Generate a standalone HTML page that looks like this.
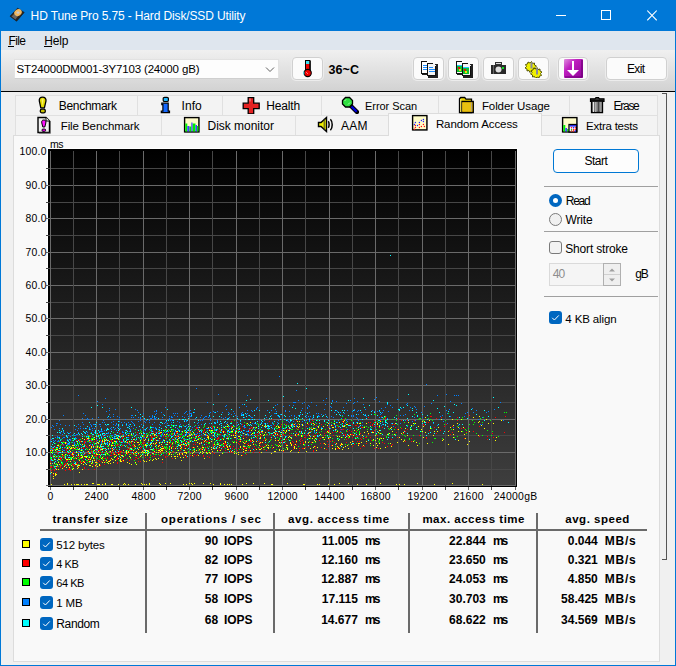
<!DOCTYPE html>
<html><head><meta charset="utf-8">
<style>
*{margin:0;padding:0;box-sizing:border-box}
html,body{width:676px;height:666px;overflow:hidden;background:#f0f0f0}
body{position:relative;font-family:"Liberation Sans",sans-serif;font-size:11.5px;color:#000}
.a{position:absolute}
.t{position:absolute;white-space:nowrap;line-height:14px}
#title{left:0;top:0;width:676px;height:31px;background:#0078d7}
#menubar{left:1px;top:31px;width:674px;height:19px;background:#dfe6ee}
#toolbar{left:1px;top:50px;width:674px;height:41px;background:linear-gradient(#f0f0f0,#d2d2d2)}
#tbline{left:1px;top:91px;width:674px;height:1px;background:#000}
.bl{background:#0078d7}
.btn{position:absolute;background:#fbfbfb;border:1px solid #d0d0d0;border-radius:4px;box-shadow:0 0 0 1px #ececec}
.tab{position:absolute;background:#f3f3f3;border:1px solid #e0e0e0;border-bottom:none}
.mono{font-family:"Liberation Mono",monospace;font-weight:bold}
.chk{position:absolute;width:13px;height:13px;border-radius:3px;background:#0067c0}
.chk svg{position:absolute;left:0;top:0}
.sq{position:absolute;width:8px;height:8px;border:1px solid #000}
.sep{position:absolute;height:1px;background:#a0a0a0}
</style></head><body>

<!-- title bar -->
<div id="title" class="a"></div>
<svg class="a" style="left:0;top:0" width="30" height="30" viewBox="0 0 30 30">
  <path d="M10 16.2L17.6 8.2L24.2 12.4L16.6 21.2z" fill="#2a2520" stroke="#1a1510" stroke-width="0.6"/>
  <path d="M11.5 16.5L14.5 13.5L18 16L15.5 19.5z" fill="#6a6560"/>
  <ellipse cx="18" cy="12.6" rx="3.9" ry="3.3" transform="rotate(-35 18 12.6)" fill="#f0b860"/>
  <ellipse cx="18" cy="12.6" rx="1.4" ry="1.2" fill="#c8c8d0"/>
</svg>
<div class="a" style="left:556px;top:15px;width:10px;height:1px;background:#fff"></div>
<div class="a" style="left:601px;top:10px;width:10px;height:10px;border:1px solid #fff"></div>
<svg class="a" style="left:647px;top:10px" width="10" height="11" viewBox="0 0 10 11"><path d="M0.3 0.5L9.7 10.3M9.7 0.5L0.3 10.3" stroke="#fff" stroke-width="1.05"/></svg>

<!-- borders -->
<div class="a bl" style="left:0;top:0;width:1px;height:666px"></div>
<div class="a bl" style="left:675px;top:0;width:1px;height:666px"></div>
<div class="a bl" style="left:0;top:665px;width:676px;height:1px"></div>

<!-- menu -->
<div id="menubar" class="a"></div>
<div class="a" style="left:8px;top:46px;width:6px;height:1px;background:#000"></div>
<div class="a" style="left:44px;top:46px;width:8px;height:1px;background:#000"></div>

<!-- toolbar -->
<div id="toolbar" class="a"></div>
<div id="tbline" class="a"></div>
<div class="a" style="left:14px;top:59px;width:265px;height:20px;background:#fdfdfd;border:1px solid #e2e2e2;border-bottom-color:#cfcfcf"></div>
<svg class="a" style="left:265px;top:66px" width="10" height="7" viewBox="0 0 10 7"><path d="M1 1.5L5 5.5L9 1.5" fill="none" stroke="#606060" stroke-width="1"/></svg>

<div class="btn" style="left:292px;top:57px;width:31px;height:23px"></div>
<svg class="a" style="left:300px;top:58px" width="14" height="20" viewBox="0 0 14 20">
  <rect x="5.5" y="2.5" width="4.5" height="12" fill="#f00000" stroke="#000" stroke-width="1"/>
  <rect x="6" y="3" width="3.5" height="3" fill="#40e0f0"/>
  <rect x="9.5" y="3" width="1.2" height="11" fill="#000"/>
  <circle cx="7.7" cy="15" r="3.6" fill="#f00000" stroke="#000" stroke-width="1.1"/>
  <path d="M3.8 13.5v3" stroke="#40e0f0" stroke-width="1"/>
  <path d="M6.5 14.5l1 1" stroke="#fff" stroke-width="0.9"/>
</svg>

<div class="btn" style="left:413px;top:57px;width:31px;height:23px"></div>
<div class="btn" style="left:448px;top:57px;width:31px;height:23px"></div>
<div class="btn" style="left:483px;top:57px;width:31px;height:23px"></div>
<div class="btn" style="left:518px;top:57px;width:31px;height:23px"></div>
<div class="btn" style="left:558px;top:57px;width:30px;height:23px"></div>
<div class="btn" style="left:606px;top:57px;width:61px;height:23px"></div>

<!-- toolbar icons -->
<svg class="a" style="left:419px;top:60px" width="20" height="19" viewBox="0 0 20 19" shape-rendering="crispEdges">
  <rect x="3" y="3" width="7" height="12" fill="#222"/>
  <path d="M2 1h6l2 2v11H2z" fill="#fff"/>
  <path d="M2 1h6v1H3v12H2zM2 13h8v1H2zM9 3h1v11H9z" fill="#111"/>
  <rect x="4" y="5" width="4" height="1" fill="#1a8cff"/><rect x="4" y="7" width="5" height="1" fill="#1a8cff"/><rect x="4" y="9" width="5" height="1" fill="#1a8cff"/>
  <rect x="9" y="4" width="10" height="14" fill="#222"/>
  <path d="M8 3h6l3 3v10H8z" fill="#f4f4f4"/>
  <path d="M8 3h6v1H9v11h7V6h1v10H8z" fill="#111"/>
  <rect x="10" y="7" width="4" height="1" fill="#1a8cff"/><rect x="10" y="9" width="6" height="1" fill="#1a8cff"/><rect x="10" y="11" width="6" height="1" fill="#1a8cff"/>
</svg>
<svg class="a" style="left:454px;top:60px" width="20" height="19" viewBox="0 0 20 19" shape-rendering="crispEdges">
  <rect x="3" y="3" width="7" height="12" fill="#222"/>
  <path d="M2 1h6l2 2v11H2z" fill="#fff"/>
  <path d="M2 1h6v1H3v12H2zM2 13h8v1H2zM9 3h1v11H9z" fill="#111"/>
  <rect x="3" y="5" width="6" height="1" fill="#20c8ff"/><rect x="3" y="6" width="6" height="6" fill="#10c030"/><rect x="4" y="7" width="2" height="2" fill="#e01010"/><rect x="5" y="9" width="2" height="2" fill="#f0e000"/>
  <rect x="9" y="4" width="10" height="14" fill="#222"/>
  <path d="M8 3h6l3 3v10H8z" fill="#f4f4f4"/>
  <path d="M8 3h6v1H9v11h7V6h1v10H8z" fill="#111"/>
  <rect x="9" y="7" width="6" height="1" fill="#20c8ff"/><rect x="9" y="8" width="6" height="6" fill="#10c030"/><rect x="10" y="9" width="2" height="2" fill="#e01010"/><rect x="11" y="11" width="2" height="2" fill="#f0e000"/>
</svg>
<svg class="a" style="left:490px;top:61px" width="17" height="14" viewBox="0 0 17 14" shape-rendering="crispEdges">
  <rect x="5" y="1" width="7" height="3" fill="#333"/><rect x="6" y="2" width="5" height="1" fill="#ddd"/>
  <rect x="1" y="4" width="15" height="9" fill="#2a2a2a"/>
  <rect x="3" y="4" width="1" height="9" fill="#666"/>
  <circle cx="8.5" cy="8.5" r="3" fill="#e0e0e0" shape-rendering="auto"/>
  <rect x="12" y="6" width="2" height="2" fill="#10e020"/>
</svg>
<svg class="a" style="left:525px;top:60px" width="20" height="18" viewBox="0 0 20 18">
  <g fill="#f0f000" stroke="#4a4a00" stroke-width="0.9">
    <path d="M6.5 1.5l1 2 2-0.5 0 2 2 1-1.5 1.5 1 2-2 0.5-0.5 2-2-1-1.5 1.5-1-2-2 0.5 0-2-2-1 1.5-1.5-1-2 2-0.5 0.5-2 2 1z"/>
    <path d="M12 7.5l1 2 2-0.5 0 2 2 1-1.5 1.5 1 2-2 0.5-0.5 2-2-1-1.5 1.5-1-2-2 0.5 0-2-2-1 1.5-1.5-1-2 2-0.5 0.5-2 2 1z"/>
  </g>
  <rect x="5.5" y="2.5" width="2" height="6" fill="#8888a0"/>
  <rect x="11" y="8.5" width="2" height="6" fill="#8888a0"/>
</svg>
<svg class="a" style="left:564px;top:59px" width="20" height="19" viewBox="0 0 20 19">
  <defs><linearGradient id="pg" x1="0" y1="0" x2="1" y2="1"><stop offset="0" stop-color="#e090e0"/><stop offset="0.35" stop-color="#c020c0"/><stop offset="1" stop-color="#900098"/></linearGradient></defs>
  <rect x="0" y="0" width="19" height="19" rx="1" fill="url(#pg)"/>
  <path d="M18 1v17H1" fill="none" stroke="#70007a" stroke-width="1.2"/>
  <rect x="8" y="2" width="2" height="11" fill="#fff"/>
  <path d="M3 11h12l-6 6z" fill="#fff"/>
</svg>

<!-- tabs -->
<!-- row 1 -->
<div class="tab" style="left:15px;top:95px;width:123px;height:20px"></div>
<div class="tab" style="left:137px;top:95px;width:86px;height:20px"></div>
<div class="tab" style="left:222px;top:95px;width:100px;height:20px"></div>
<div class="tab" style="left:321px;top:95px;width:118px;height:20px"></div>
<div class="tab" style="left:438px;top:95px;width:132px;height:20px"></div>
<div class="tab" style="left:569px;top:95px;width:89px;height:20px"></div>
<!-- row 2 -->
<div class="tab" style="left:15px;top:115px;width:147px;height:21px"></div>
<div class="tab" style="left:161px;top:115px;width:135px;height:21px"></div>
<div class="tab" style="left:295px;top:115px;width:94px;height:21px"></div>
<div class="tab" style="left:541px;top:115px;width:117px;height:21px"></div>

<!-- page -->
<div class="a" style="left:13px;top:135px;width:647px;height:527px;background:#f9f9f9;border:1px solid #dcdcdc"></div>
<!-- selected tab -->
<div class="a" style="left:388px;top:113px;width:154px;height:23px;background:#f9f9f9;border:1px solid #dcdcdc;border-bottom:none"></div>


<!-- tab icons -->
<svg class="a" style="left:37px;top:96px" width="12" height="18" viewBox="0 0 12 18">
  <path d="M5.5 1.2C3.2 1.2 2 2.6 2.3 4.8L3.8 11.8h3.6L9 4.8C9.3 2.6 8 1.2 5.5 1.2z" fill="#e4dc00" stroke="#000" stroke-width="1.3"/>
  <path d="M4.6 3.2c0.6-0.6 1.6-0.6 2 0l-1 7z" fill="#f8f070"/>
  <rect x="3.3" y="13.2" width="5" height="3.6" rx="1.6" fill="#c8c000" stroke="#000" stroke-width="1.3"/>
</svg>
<svg class="a" style="left:36px;top:116px" width="16" height="18" viewBox="0 0 16 18">
  <path d="M2 1.5h8l3.5 3.5v11.5H2z" fill="#f0f0f0" stroke="#000" stroke-width="1.4"/>
  <path d="M10 1.5v3.5h3.5" fill="#fff" stroke="#000" stroke-width="1"/>
  <path d="M14.5 5v12.3H3" fill="none" stroke="#777" stroke-width="1"/>
  <path d="M7.8 4C6 4 5.4 5.2 5.8 7l1 4h2l1-4C10.2 5.2 9.6 4 7.8 4z" fill="#ff10ff" stroke="#000" stroke-width="1"/>
  <rect x="6" y="13" width="3.6" height="2.4" rx="1" fill="#e000e0" stroke="#000" stroke-width="0.9"/>
</svg>
<svg class="a" style="left:160px;top:96px" width="12" height="18" viewBox="0 0 12 18">
  <rect x="3.2" y="1.3" width="5.2" height="4.2" rx="1.3" fill="#20b8ff" stroke="#000" stroke-width="1.2"/>
  <path d="M1.8 7.2h6.4v8h1.3v1.4H1.3v-1.4h1.6V8.6H1.8z" fill="#1468ff" stroke="#000" stroke-width="1.2"/>
</svg>
<svg class="a" style="left:242px;top:96px" width="18" height="18" viewBox="0 0 18 18">
  <path d="M6.2 1.7h5.5v5.5h5.5v5.5h-5.5v5.3H6.2v-5.3H1.2V7.2h5z" fill="#e42222" stroke="#000" stroke-width="1.3"/>
  <rect x="7" y="2.5" width="2" height="3" fill="#f06060"/>
</svg>
<svg class="a" style="left:340px;top:96px" width="19" height="18" viewBox="0 0 19 18">
  <path d="M11.5 10.5l5.5 5.5" stroke="#000" stroke-width="4.2" stroke-linecap="square"/>
  <path d="M11.5 10.5l5.2 5.2" stroke="#0000e0" stroke-width="2.2"/>
  <path d="M5.5 1.5h4l3 3v3.5l-3 3h-4l-3-3V4.5z" fill="#30e040" stroke="#000" stroke-width="1.3"/>
  <path d="M4.5 5l1.5-1.5M8 8.5l2-2" stroke="#c0ffc0" stroke-width="0.8"/>
</svg>
<svg class="a" style="left:458px;top:96px" width="17" height="18" viewBox="0 0 17 18">
  <path d="M1.5 2.8l1.2-1.3h4l1.3 1.6h5.5v13.5H1.5z" fill="#f0d800" stroke="#000" stroke-width="1.3"/>
  <path d="M3.5 5.5h11.8v11H3.5z" fill="#e4b400" stroke="#000" stroke-width="1.3"/>
  <path d="M4.5 6.5h9v9h-9z" fill="#e8c010"/>
  <rect x="13" y="6.5" width="1" height="9" fill="#b0a080"/>
  <rect x="2.3" y="3" width="1" height="13" fill="#fff080"/>
</svg>
<svg class="a" style="left:589px;top:96px" width="16" height="18" viewBox="0 0 16 18">
  <path d="M1.5 2.8h4.5l1-1.3h2.5l1 1.3h4.5v2.5h-13.5z" fill="#333" stroke="#000" stroke-width="1.2"/>
  <path d="M2.5 5h11v11.5h-11z" fill="#777" stroke="#000" stroke-width="1.3"/>
  <rect x="4" y="6" width="1" height="10" fill="#e8e8e8"/><rect x="6" y="6" width="1.5" height="10" fill="#aaa"/><rect x="9" y="6" width="1" height="10" fill="#444"/><rect x="11" y="6" width="1.5" height="10" fill="#999"/>
</svg>
<svg class="a" style="left:183px;top:116px" width="18" height="18" viewBox="0 0 18 18">
  <rect x="2" y="2" width="14.5" height="14.5" fill="#444" opacity="0.4"/>
  <rect x="1.6" y="1.6" width="14.3" height="14.3" fill="#fffcc8" stroke="#000" stroke-width="1.4"/>
  <path d="M2.3 7.5h2v8h-2zM6.3 10.5h2v5h-2zM9.5 7.5h3v8h-3zM14 10h1.3v5.5H14z" fill="#00ee00"/>
  <path d="M4.3 10h2v5.5h-2zM8.3 6.5h1.2v9H8.3zM12.5 9h1.5v6.5h-1.5z" fill="#4040ff"/>
</svg>
<svg class="a" style="left:317px;top:116px" width="18" height="17" viewBox="0 0 18 17">
  <path d="M1.5 6.5h2.5l5.5-5v14l-5.5-5H1.5z" fill="#f0f000" stroke="#000" stroke-width="1.4"/>
  <path d="M7.2 2.8v11.4" stroke="#333" stroke-width="0.9"/>
  <path d="M11.2 5.2c1.2 1.2 1.2 5.4 0 6.6M13.4 3.2c2.4 2.4 2.4 8.6 0 11" fill="none" stroke="#000" stroke-width="1.5"/>
</svg>
<svg class="a" style="left:411px;top:114px" width="18" height="18" viewBox="0 0 18 18">
  <rect x="2" y="2" width="14.5" height="14.5" fill="#444" opacity="0.4"/>
  <rect x="1.6" y="1.6" width="14.3" height="14.3" fill="#fffcc8" stroke="#000" stroke-width="1.4"/>
  <g fill="#2020ff"><circle cx="4.4" cy="8.5" r="0.7"/><circle cx="3.4" cy="10.5" r="0.7"/><circle cx="6.5" cy="11.5" r="0.7"/><circle cx="8.4" cy="8.5" r="0.7"/><circle cx="10.4" cy="6.5" r="0.7"/><circle cx="12.4" cy="5.5" r="0.7"/><circle cx="12.4" cy="7.5" r="0.7"/></g>
  <g fill="#ff1010"><circle cx="4.4" cy="11.5" r="0.7"/><circle cx="4.4" cy="13.5" r="0.7"/><circle cx="8.4" cy="10.5" r="0.7"/><circle cx="8.4" cy="13.5" r="0.7"/><circle cx="10.4" cy="12.5" r="0.7"/><circle cx="12.4" cy="10.5" r="0.7"/><circle cx="13.4" cy="12.5" r="0.7"/><circle cx="3.4" cy="15.3" r="0.7"/></g>
</svg>
<svg class="a" style="left:561px;top:116px" width="18" height="18" viewBox="0 0 18 18">
  <rect x="2" y="2" width="14.5" height="14.5" fill="#444" opacity="0.4"/>
  <rect x="1.6" y="1.6" width="14.3" height="14.3" fill="#fffcc8" stroke="#000" stroke-width="1.4"/>
  <path d="M2.3 9h2v6.5h-2z" fill="#00ee00"/><path d="M4.3 12h1.8v3.5H4.3z" fill="#4040ff"/><path d="M6.1 13h1.4v2.5H6.1z" fill="#00ee00"/>
  <rect x="8" y="8.5" width="7.5" height="7.5" fill="#fff" stroke="#000" stroke-width="1.3"/>
  <rect x="8.7" y="9.2" width="6.6" height="1.3" fill="#0000e0"/>
  <g fill="#ff1010"><circle cx="10.5" cy="11.8" r="0.75"/><circle cx="12.5" cy="13.8" r="0.75"/><circle cx="14.3" cy="11.8" r="0.75"/><circle cx="10.5" cy="15" r="0.75"/><circle cx="12.5" cy="15" r="0.75"/><circle cx="14.3" cy="13.8" r="0.75"/></g>
  <g fill="#1010ff"><circle cx="12.5" cy="11.8" r="0.75"/><circle cx="14.3" cy="15" r="0.75"/></g>
  <circle cx="10.5" cy="13.8" r="0.75" fill="#10c010"/>
</svg>

<!-- right bracket line -->
<div class="a" style="left:662px;top:93px;width:5px;height:1px;background:#555"></div>
<div class="a" style="left:666px;top:93px;width:1px;height:467px;background:#555"></div>
<div class="a" style="left:662px;top:559px;width:5px;height:1px;background:#555"></div>

<!-- chart -->
<svg class="a" style="left:0;top:0" width="676" height="666" viewBox="0 0 676 666" shape-rendering="crispEdges">
  <defs><linearGradient id="cg" x1="0" y1="0" x2="0" y2="1"><stop offset="0" stop-color="#000"/><stop offset="1" stop-color="#3e3e3e"/></linearGradient></defs>
  <rect x="47" y="148" width="471" height="340" fill="#fff"/>
  <rect x="48" y="149" width="469" height="338" fill="#000"/>
  <rect x="50" y="151" width="465" height="335" fill="url(#cg)"/>
  <rect x="46" y="485" width="470" height="1" fill="#6a6a6a"/>
<rect x="46" y="469" width="470" height="1" fill="#474747"/>
<rect x="46" y="452" width="470" height="1" fill="#6a6a6a"/>
<rect x="46" y="435" width="470" height="1" fill="#474747"/>
<rect x="46" y="419" width="470" height="1" fill="#6a6a6a"/>
<rect x="46" y="402" width="470" height="1" fill="#474747"/>
<rect x="46" y="385" width="470" height="1" fill="#6a6a6a"/>
<rect x="46" y="369" width="470" height="1" fill="#474747"/>
<rect x="46" y="352" width="470" height="1" fill="#6a6a6a"/>
<rect x="46" y="335" width="470" height="1" fill="#474747"/>
<rect x="46" y="318" width="470" height="1" fill="#6a6a6a"/>
<rect x="46" y="302" width="470" height="1" fill="#474747"/>
<rect x="46" y="285" width="470" height="1" fill="#6a6a6a"/>
<rect x="46" y="268" width="470" height="1" fill="#474747"/>
<rect x="46" y="252" width="470" height="1" fill="#6a6a6a"/>
<rect x="46" y="235" width="470" height="1" fill="#474747"/>
<rect x="46" y="218" width="470" height="1" fill="#6a6a6a"/>
<rect x="46" y="202" width="470" height="1" fill="#474747"/>
<rect x="46" y="185" width="470" height="1" fill="#6a6a6a"/>
<rect x="46" y="168" width="470" height="1" fill="#474747"/>
<rect x="50" y="151" width="1" height="339" fill="#6a6a6a"/>
<rect x="73" y="151" width="1" height="339" fill="#474747"/>
<rect x="96" y="151" width="1" height="339" fill="#6a6a6a"/>
<rect x="119" y="151" width="1" height="339" fill="#474747"/>
<rect x="143" y="151" width="1" height="339" fill="#6a6a6a"/>
<rect x="166" y="151" width="1" height="339" fill="#474747"/>
<rect x="189" y="151" width="1" height="339" fill="#6a6a6a"/>
<rect x="212" y="151" width="1" height="339" fill="#474747"/>
<rect x="236" y="151" width="1" height="339" fill="#6a6a6a"/>
<rect x="259" y="151" width="1" height="339" fill="#474747"/>
<rect x="282" y="151" width="1" height="339" fill="#6a6a6a"/>
<rect x="305" y="151" width="1" height="339" fill="#474747"/>
<rect x="329" y="151" width="1" height="339" fill="#6a6a6a"/>
<rect x="352" y="151" width="1" height="339" fill="#474747"/>
<rect x="375" y="151" width="1" height="339" fill="#6a6a6a"/>
<rect x="398" y="151" width="1" height="339" fill="#474747"/>
<rect x="422" y="151" width="1" height="339" fill="#6a6a6a"/>
<rect x="445" y="151" width="1" height="339" fill="#474747"/>
<rect x="468" y="151" width="1" height="339" fill="#6a6a6a"/>
<rect x="491" y="151" width="1" height="339" fill="#474747"/>
<rect x="515" y="151" width="1" height="339" fill="#6a6a6a"/>
<rect x="48" y="486" width="469" height="1" fill="#000"/>
  <path fill="#ffff00" d="M250 450h1v1h-1zM236 428h1v1h-1zM148 434h1v1h-1zM89 461h1v1h-1zM223 443h1v1h-1zM118 458h1v1h-1zM203 483h1v1h-1zM78 455h1v1h-1zM486 419h1v1h-1zM140 454h1v1h-1zM204 441h1v1h-1zM293 433h1v1h-1zM84 456h1v1h-1zM77 468h1v1h-1zM225 441h1v1h-1zM73 445h1v1h-1zM109 461h1v1h-1zM211 433h1v1h-1zM279 439h1v1h-1zM243 446h1v1h-1zM327 425h1v1h-1zM395 423h1v1h-1zM323 437h1v1h-1zM357 484h1v1h-1zM423 437h1v1h-1zM390 443h1v1h-1zM152 456h1v1h-1zM358 445h1v1h-1zM324 448h1v1h-1zM139 444h1v1h-1zM101 444h1v1h-1zM179 445h1v1h-1zM182 436h1v1h-1zM372 424h1v1h-1zM335 446h1v1h-1zM81 457h1v1h-1zM179 437h1v1h-1zM392 431h1v1h-1zM398 429h1v1h-1zM175 458h1v1h-1zM118 439h1v1h-1zM278 427h1v1h-1zM65 454h1v1h-1zM335 448h1v1h-1zM232 427h1v1h-1zM107 443h1v1h-1z"/>
<path fill="#ff0000" d="M73 453h1v1h-1zM139 457h1v1h-1zM117 459h1v1h-1zM217 438h1v1h-1zM152 437h1v1h-1zM203 432h1v1h-1zM270 437h1v1h-1zM130 447h1v1h-1zM66 461h1v1h-1zM250 428h1v1h-1zM123 452h1v1h-1zM128 452h1v1h-1zM300 443h1v1h-1zM328 431h1v1h-1zM245 448h1v1h-1zM99 456h1v1h-1zM473 431h1v1h-1zM352 434h1v1h-1zM314 437h1v1h-1zM194 450h1v1h-1zM137 434h1v1h-1zM53 449h1v1h-1zM331 445h1v1h-1zM126 459h1v1h-1zM145 449h1v1h-1zM88 469h1v1h-1zM248 443h1v1h-1zM64 465h1v1h-1zM346 424h1v1h-1zM64 464h1v1h-1zM72 464h1v1h-1zM308 424h1v1h-1zM218 437h1v1h-1zM100 452h1v1h-1zM95 451h1v1h-1zM218 438h1v1h-1zM296 432h1v1h-1zM95 466h1v1h-1zM66 465h1v1h-1zM163 439h1v1h-1zM176 447h1v1h-1zM80 450h1v1h-1zM249 430h1v1h-1zM183 441h1v1h-1z"/>
<path fill="#00ff00" d="M202 430h1v1h-1zM149 445h1v1h-1zM212 439h1v1h-1zM214 442h1v1h-1zM56 448h1v1h-1zM194 448h1v1h-1zM182 436h1v1h-1zM428 418h1v1h-1zM94 439h1v1h-1zM344 439h1v1h-1zM419 418h1v1h-1zM240 438h1v1h-1zM119 460h1v1h-1zM135 432h1v1h-1zM374 414h1v1h-1zM153 449h1v1h-1zM146 444h1v1h-1zM127 447h1v1h-1zM180 434h1v1h-1zM234 442h1v1h-1zM298 435h1v1h-1zM170 440h1v1h-1zM357 430h1v1h-1zM144 450h1v1h-1zM109 455h1v1h-1zM54 452h1v1h-1zM127 458h1v1h-1zM179 427h1v1h-1zM102 459h1v1h-1zM169 447h1v1h-1zM296 433h1v1h-1zM414 423h1v1h-1zM258 435h1v1h-1zM152 438h1v1h-1zM275 444h1v1h-1zM170 442h1v1h-1zM61 444h1v1h-1zM155 434h1v1h-1zM76 449h1v1h-1zM305 422h1v1h-1zM104 435h1v1h-1zM188 429h1v1h-1zM356 432h1v1h-1zM55 461h1v1h-1z"/>
<path fill="#0080ff" d="M88 419h1v1h-1zM73 454h1v1h-1zM114 440h1v1h-1zM437 425h1v1h-1zM169 416h1v1h-1zM214 429h1v1h-1zM83 428h1v1h-1zM63 441h1v1h-1zM214 423h1v1h-1zM114 429h1v1h-1zM177 435h1v1h-1zM151 431h1v1h-1zM244 433h1v1h-1zM458 395h1v1h-1zM63 432h1v1h-1zM365 409h1v1h-1zM76 426h1v1h-1zM159 424h1v1h-1zM358 410h1v1h-1zM162 434h1v1h-1zM65 425h1v1h-1zM416 409h1v1h-1zM238 429h1v1h-1zM446 394h1v1h-1zM122 438h1v1h-1zM131 421h1v1h-1zM254 423h1v1h-1zM264 423h1v1h-1zM295 423h1v1h-1zM299 419h1v1h-1zM112 435h1v1h-1zM160 425h1v1h-1zM195 418h1v1h-1zM128 425h1v1h-1zM329 424h1v1h-1zM140 429h1v1h-1zM54 441h1v1h-1zM188 443h1v1h-1zM217 421h1v1h-1zM146 433h1v1h-1zM122 424h1v1h-1zM184 426h1v1h-1z"/>
<path fill="#00ffff" d="M66 464h1v1h-1zM88 438h1v1h-1zM279 416h1v1h-1zM264 437h1v1h-1zM388 434h1v1h-1zM96 440h1v1h-1zM129 454h1v1h-1zM221 430h1v1h-1zM69 450h1v1h-1zM289 428h1v1h-1zM292 426h1v1h-1zM326 416h1v1h-1zM192 431h1v1h-1zM346 436h1v1h-1zM51 457h1v1h-1zM350 425h1v1h-1zM289 440h1v1h-1zM118 436h1v1h-1zM296 417h1v1h-1zM152 431h1v1h-1zM474 422h1v1h-1zM186 428h1v1h-1zM82 441h1v1h-1zM95 431h1v1h-1zM433 400h1v1h-1zM202 439h1v1h-1zM216 430h1v1h-1zM77 447h1v1h-1zM95 449h1v1h-1zM220 439h1v1h-1zM228 425h1v1h-1zM290 428h1v1h-1zM177 433h1v1h-1zM259 410h1v1h-1zM383 424h1v1h-1zM152 441h1v1h-1zM278 420h1v1h-1zM227 442h1v1h-1zM106 433h1v1h-1zM104 433h1v1h-1zM291 420h1v1h-1zM75 462h1v1h-1zM67 443h1v1h-1zM283 442h1v1h-1z"/>
<path fill="#ffff00" d="M234 453h1v1h-1zM291 445h1v1h-1zM99 465h1v1h-1zM287 448h1v1h-1zM91 452h1v1h-1zM227 447h1v1h-1zM349 436h1v1h-1zM125 484h1v1h-1zM443 439h1v1h-1zM315 441h1v1h-1zM289 430h1v1h-1zM363 438h1v1h-1zM301 436h1v1h-1zM186 445h1v1h-1zM329 428h1v1h-1zM104 443h1v1h-1zM70 451h1v1h-1zM75 444h1v1h-1zM223 446h1v1h-1zM315 438h1v1h-1zM89 453h1v1h-1zM207 435h1v1h-1zM360 423h1v1h-1zM92 455h1v1h-1zM164 440h1v1h-1zM121 436h1v1h-1zM141 455h1v1h-1zM169 448h1v1h-1zM170 431h1v1h-1zM111 484h1v1h-1zM210 483h1v1h-1zM177 442h1v1h-1zM421 429h1v1h-1zM279 427h1v1h-1zM175 456h1v1h-1zM357 422h1v1h-1zM56 474h1v1h-1zM97 466h1v1h-1zM182 444h1v1h-1zM191 437h1v1h-1zM259 432h1v1h-1zM155 443h1v1h-1zM166 434h1v1h-1zM404 440h1v1h-1zM145 445h1v1h-1zM256 449h1v1h-1z"/>
<path fill="#ff0000" d="M265 439h1v1h-1zM201 448h1v1h-1zM135 457h1v1h-1zM298 446h1v1h-1zM225 442h1v1h-1zM222 429h1v1h-1zM50 467h1v1h-1zM343 434h1v1h-1zM251 427h1v1h-1zM326 449h1v1h-1zM487 439h1v1h-1zM431 416h1v1h-1zM73 464h1v1h-1zM219 450h1v1h-1zM353 441h1v1h-1zM154 444h1v1h-1zM104 434h1v1h-1zM227 437h1v1h-1zM261 442h1v1h-1zM88 440h1v1h-1zM199 437h1v1h-1zM136 452h1v1h-1zM161 452h1v1h-1zM268 430h1v1h-1zM180 440h1v1h-1zM104 442h1v1h-1zM74 465h1v1h-1zM112 449h1v1h-1zM288 437h1v1h-1zM403 420h1v1h-1zM300 439h1v1h-1zM131 453h1v1h-1zM100 440h1v1h-1zM203 442h1v1h-1zM116 434h1v1h-1zM84 467h1v1h-1zM129 435h1v1h-1zM119 439h1v1h-1zM402 434h1v1h-1zM368 422h1v1h-1zM391 439h1v1h-1zM193 444h1v1h-1zM364 446h1v1h-1zM186 443h1v1h-1z"/>
<path fill="#00ff00" d="M351 420h1v1h-1zM316 429h1v1h-1zM75 457h1v1h-1zM61 463h1v1h-1zM208 442h1v1h-1zM161 449h1v1h-1zM82 453h1v1h-1zM476 433h1v1h-1zM84 436h1v1h-1zM417 429h1v1h-1zM260 429h1v1h-1zM70 449h1v1h-1zM108 440h1v1h-1zM100 457h1v1h-1zM89 438h1v1h-1zM68 464h1v1h-1zM177 446h1v1h-1zM348 444h1v1h-1zM138 445h1v1h-1zM206 444h1v1h-1zM190 441h1v1h-1zM72 468h1v1h-1zM132 449h1v1h-1zM321 431h1v1h-1zM172 451h1v1h-1zM65 447h1v1h-1zM321 435h1v1h-1zM134 439h1v1h-1zM128 452h1v1h-1zM128 427h1v1h-1zM373 440h1v1h-1zM171 427h1v1h-1zM146 447h1v1h-1zM342 415h1v1h-1zM333 423h1v1h-1zM122 435h1v1h-1zM70 457h1v1h-1zM61 439h1v1h-1zM405 436h1v1h-1zM266 439h1v1h-1zM190 432h1v1h-1zM110 439h1v1h-1zM178 434h1v1h-1zM99 459h1v1h-1z"/>
<path fill="#0080ff" d="M265 423h1v1h-1zM245 427h1v1h-1zM215 437h1v1h-1zM392 407h1v1h-1zM76 434h1v1h-1zM184 430h1v1h-1zM68 435h1v1h-1zM110 438h1v1h-1zM201 434h1v1h-1zM254 427h1v1h-1zM132 440h1v1h-1zM150 434h1v1h-1zM116 442h1v1h-1zM177 416h1v1h-1zM175 413h1v1h-1zM309 406h1v1h-1zM258 428h1v1h-1zM125 419h1v1h-1zM443 421h1v1h-1zM158 440h1v1h-1zM433 423h1v1h-1zM307 407h1v1h-1zM108 449h1v1h-1zM337 411h1v1h-1zM214 435h1v1h-1zM387 404h1v1h-1zM163 414h1v1h-1zM227 422h1v1h-1zM269 434h1v1h-1zM88 419h1v1h-1zM166 441h1v1h-1zM106 425h1v1h-1zM199 433h1v1h-1zM350 400h1v1h-1zM272 422h1v1h-1zM70 446h1v1h-1zM361 412h1v1h-1zM476 410h1v1h-1zM258 425h1v1h-1zM345 423h1v1h-1zM381 413h1v1h-1zM241 439h1v1h-1z"/>
<path fill="#00ffff" d="M54 454h1v1h-1zM85 463h1v1h-1zM217 444h1v1h-1zM133 444h1v1h-1zM100 446h1v1h-1zM271 415h1v1h-1zM249 425h1v1h-1zM173 426h1v1h-1zM90 440h1v1h-1zM261 430h1v1h-1zM236 440h1v1h-1zM235 431h1v1h-1zM167 431h1v1h-1zM305 430h1v1h-1zM213 445h1v1h-1zM123 439h1v1h-1zM145 429h1v1h-1zM229 445h1v1h-1zM426 435h1v1h-1zM362 419h1v1h-1zM363 398h1v1h-1zM292 427h1v1h-1zM433 422h1v1h-1zM254 415h1v1h-1zM52 459h1v1h-1zM198 420h1v1h-1zM84 432h1v1h-1zM379 430h1v1h-1zM355 438h1v1h-1zM299 431h1v1h-1zM245 442h1v1h-1zM162 419h1v1h-1zM154 416h1v1h-1zM400 407h1v1h-1zM352 443h1v1h-1zM371 429h1v1h-1zM88 439h1v1h-1zM52 435h1v1h-1zM125 446h1v1h-1zM124 445h1v1h-1zM108 424h1v1h-1zM105 450h1v1h-1zM179 431h1v1h-1zM90 445h1v1h-1z"/>
<path fill="#ffff00" d="M425 432h1v1h-1zM158 450h1v1h-1zM71 448h1v1h-1zM103 438h1v1h-1zM219 445h1v1h-1zM108 448h1v1h-1zM261 431h1v1h-1zM133 450h1v1h-1zM60 447h1v1h-1zM100 449h1v1h-1zM200 452h1v1h-1zM160 442h1v1h-1zM71 465h1v1h-1zM290 442h1v1h-1zM180 457h1v1h-1zM102 441h1v1h-1zM93 446h1v1h-1zM496 437h1v1h-1zM58 445h1v1h-1zM298 434h1v1h-1zM64 450h1v1h-1zM294 424h1v1h-1zM94 437h1v1h-1zM312 442h1v1h-1zM208 437h1v1h-1zM362 435h1v1h-1zM78 467h1v1h-1zM228 449h1v1h-1zM69 453h1v1h-1zM401 433h1v1h-1zM253 427h1v1h-1zM96 457h1v1h-1zM107 442h1v1h-1zM332 448h1v1h-1zM327 436h1v1h-1zM282 428h1v1h-1zM131 450h1v1h-1zM142 436h1v1h-1zM82 438h1v1h-1zM286 427h1v1h-1zM153 433h1v1h-1zM397 442h1v1h-1zM84 462h1v1h-1zM159 450h1v1h-1zM309 429h1v1h-1zM405 428h1v1h-1z"/>
<path fill="#ff0000" d="M122 441h1v1h-1zM104 441h1v1h-1zM60 447h1v1h-1zM311 442h1v1h-1zM71 454h1v1h-1zM84 442h1v1h-1zM163 436h1v1h-1zM188 451h1v1h-1zM219 431h1v1h-1zM352 424h1v1h-1zM119 439h1v1h-1zM178 435h1v1h-1zM53 466h1v1h-1zM102 450h1v1h-1zM263 440h1v1h-1zM350 427h1v1h-1zM302 448h1v1h-1zM293 424h1v1h-1zM142 457h1v1h-1zM135 454h1v1h-1zM253 452h1v1h-1zM69 445h1v1h-1zM99 448h1v1h-1zM300 441h1v1h-1zM204 429h1v1h-1zM260 446h1v1h-1zM90 453h1v1h-1zM368 417h1v1h-1zM141 442h1v1h-1zM90 459h1v1h-1zM223 435h1v1h-1zM272 448h1v1h-1zM79 456h1v1h-1zM98 450h1v1h-1zM360 448h1v1h-1zM174 439h1v1h-1zM224 431h1v1h-1zM102 442h1v1h-1zM173 442h1v1h-1zM315 446h1v1h-1zM205 448h1v1h-1zM362 437h1v1h-1zM276 428h1v1h-1zM281 424h1v1h-1z"/>
<path fill="#00ff00" d="M172 451h1v1h-1zM348 435h1v1h-1zM472 420h1v1h-1zM346 431h1v1h-1zM337 430h1v1h-1zM125 455h1v1h-1zM214 449h1v1h-1zM237 450h1v1h-1zM392 419h1v1h-1zM345 418h1v1h-1zM382 440h1v1h-1zM320 434h1v1h-1zM130 450h1v1h-1zM76 440h1v1h-1zM204 425h1v1h-1zM122 445h1v1h-1zM135 429h1v1h-1zM169 440h1v1h-1zM110 437h1v1h-1zM119 436h1v1h-1zM55 449h1v1h-1zM57 456h1v1h-1zM292 441h1v1h-1zM201 437h1v1h-1zM87 449h1v1h-1zM381 433h1v1h-1zM150 426h1v1h-1zM218 444h1v1h-1zM314 439h1v1h-1zM246 440h1v1h-1zM366 436h1v1h-1zM94 443h1v1h-1zM91 448h1v1h-1zM171 430h1v1h-1zM332 438h1v1h-1zM75 449h1v1h-1zM224 434h1v1h-1zM165 448h1v1h-1zM150 459h1v1h-1zM192 450h1v1h-1zM97 458h1v1h-1zM156 450h1v1h-1zM178 442h1v1h-1zM186 439h1v1h-1z"/>
<path fill="#0080ff" d="M251 419h1v1h-1zM87 434h1v1h-1zM229 431h1v1h-1zM104 422h1v1h-1zM51 439h1v1h-1zM63 415h1v1h-1zM57 448h1v1h-1zM246 431h1v1h-1zM464 416h1v1h-1zM78 424h1v1h-1zM437 395h1v1h-1zM231 427h1v1h-1zM311 402h1v1h-1zM122 432h1v1h-1zM174 432h1v1h-1zM50 441h1v1h-1zM118 426h1v1h-1zM337 422h1v1h-1zM325 414h1v1h-1zM53 426h1v1h-1zM267 426h1v1h-1zM82 446h1v1h-1zM325 404h1v1h-1zM293 426h1v1h-1zM184 417h1v1h-1zM64 447h1v1h-1zM357 401h1v1h-1zM179 425h1v1h-1zM218 394h1v1h-1zM169 418h1v1h-1zM307 408h1v1h-1zM87 436h1v1h-1zM147 433h1v1h-1zM184 420h1v1h-1zM197 423h1v1h-1zM77 448h1v1h-1zM254 429h1v1h-1zM113 424h1v1h-1zM101 431h1v1h-1zM488 411h1v1h-1zM141 431h1v1h-1zM344 413h1v1h-1z"/>
<path fill="#00ffff" d="M379 425h1v1h-1zM67 451h1v1h-1zM398 409h1v1h-1zM143 432h1v1h-1zM377 431h1v1h-1zM119 447h1v1h-1zM126 430h1v1h-1zM316 420h1v1h-1zM59 438h1v1h-1zM281 414h1v1h-1zM109 444h1v1h-1zM151 446h1v1h-1zM342 433h1v1h-1zM209 446h1v1h-1zM410 427h1v1h-1zM72 454h1v1h-1zM153 438h1v1h-1zM290 420h1v1h-1zM59 432h1v1h-1zM198 420h1v1h-1zM214 434h1v1h-1zM344 410h1v1h-1zM166 438h1v1h-1zM183 438h1v1h-1zM104 441h1v1h-1zM403 407h1v1h-1zM140 437h1v1h-1zM84 445h1v1h-1zM241 435h1v1h-1zM117 441h1v1h-1zM134 436h1v1h-1zM88 436h1v1h-1zM103 438h1v1h-1zM92 444h1v1h-1zM428 433h1v1h-1zM107 436h1v1h-1zM364 407h1v1h-1zM216 440h1v1h-1zM168 420h1v1h-1zM186 431h1v1h-1zM236 442h1v1h-1zM80 444h1v1h-1zM204 449h1v1h-1zM448 411h1v1h-1z"/>
<path fill="#ffff00" d="M92 462h1v1h-1zM165 432h1v1h-1zM102 458h1v1h-1zM339 422h1v1h-1zM115 456h1v1h-1zM281 432h1v1h-1zM260 438h1v1h-1zM294 447h1v1h-1zM188 430h1v1h-1zM170 441h1v1h-1zM210 453h1v1h-1zM344 420h1v1h-1zM242 484h1v1h-1zM141 452h1v1h-1zM182 441h1v1h-1zM114 448h1v1h-1zM213 447h1v1h-1zM77 466h1v1h-1zM239 428h1v1h-1zM123 456h1v1h-1zM208 427h1v1h-1zM239 436h1v1h-1zM265 440h1v1h-1zM243 449h1v1h-1zM105 483h1v1h-1zM473 417h1v1h-1zM379 426h1v1h-1zM97 484h1v1h-1zM53 465h1v1h-1zM234 451h1v1h-1zM211 449h1v1h-1zM143 435h1v1h-1zM95 462h1v1h-1zM263 447h1v1h-1zM220 450h1v1h-1zM289 436h1v1h-1zM118 484h1v1h-1zM223 431h1v1h-1zM53 478h1v1h-1zM350 442h1v1h-1zM358 429h1v1h-1zM359 434h1v1h-1zM323 426h1v1h-1zM84 439h1v1h-1zM154 435h1v1h-1zM334 423h1v1h-1z"/>
<path fill="#ff0000" d="M60 467h1v1h-1zM244 447h1v1h-1zM316 425h1v1h-1zM193 444h1v1h-1zM94 459h1v1h-1zM320 438h1v1h-1zM83 458h1v1h-1zM109 445h1v1h-1zM54 469h1v1h-1zM147 459h1v1h-1zM81 448h1v1h-1zM292 441h1v1h-1zM159 449h1v1h-1zM117 463h1v1h-1zM81 441h1v1h-1zM103 441h1v1h-1zM66 461h1v1h-1zM91 452h1v1h-1zM293 449h1v1h-1zM301 438h1v1h-1zM283 434h1v1h-1zM162 449h1v1h-1zM94 456h1v1h-1zM143 443h1v1h-1zM214 449h1v1h-1zM120 454h1v1h-1zM272 445h1v1h-1zM120 451h1v1h-1zM182 431h1v1h-1zM100 448h1v1h-1zM222 431h1v1h-1zM151 449h1v1h-1zM128 448h1v1h-1zM75 448h1v1h-1zM156 454h1v1h-1zM207 446h1v1h-1zM82 460h1v1h-1zM373 423h1v1h-1zM144 445h1v1h-1zM144 442h1v1h-1zM225 450h1v1h-1zM183 441h1v1h-1zM83 464h1v1h-1zM283 451h1v1h-1z"/>
<path fill="#00ff00" d="M82 450h1v1h-1zM183 436h1v1h-1zM388 443h1v1h-1zM423 420h1v1h-1zM81 447h1v1h-1zM123 435h1v1h-1zM235 432h1v1h-1zM115 446h1v1h-1zM130 442h1v1h-1zM100 450h1v1h-1zM70 446h1v1h-1zM244 445h1v1h-1zM127 458h1v1h-1zM338 438h1v1h-1zM141 435h1v1h-1zM466 430h1v1h-1zM341 424h1v1h-1zM487 436h1v1h-1zM292 426h1v1h-1zM221 439h1v1h-1zM319 425h1v1h-1zM75 446h1v1h-1zM80 439h1v1h-1zM281 445h1v1h-1zM211 447h1v1h-1zM325 435h1v1h-1zM199 438h1v1h-1zM206 431h1v1h-1zM71 458h1v1h-1zM233 429h1v1h-1zM97 454h1v1h-1zM264 449h1v1h-1zM127 450h1v1h-1zM117 444h1v1h-1zM105 458h1v1h-1zM451 429h1v1h-1zM209 442h1v1h-1zM131 442h1v1h-1zM492 431h1v1h-1zM276 449h1v1h-1zM466 433h1v1h-1zM58 457h1v1h-1zM54 467h1v1h-1zM102 454h1v1h-1z"/>
<path fill="#0080ff" d="M256 424h1v1h-1zM215 432h1v1h-1zM213 411h1v1h-1zM101 438h1v1h-1zM306 420h1v1h-1zM88 435h1v1h-1zM64 437h1v1h-1zM190 431h1v1h-1zM186 429h1v1h-1zM316 405h1v1h-1zM374 399h1v1h-1zM227 430h1v1h-1zM307 433h1v1h-1zM450 401h1v1h-1zM382 412h1v1h-1zM160 435h1v1h-1zM81 433h1v1h-1zM127 437h1v1h-1zM171 419h1v1h-1zM113 416h1v1h-1zM195 429h1v1h-1zM226 438h1v1h-1zM73 452h1v1h-1zM69 433h1v1h-1zM377 411h1v1h-1zM91 432h1v1h-1zM334 412h1v1h-1zM123 441h1v1h-1zM126 425h1v1h-1zM201 431h1v1h-1zM90 433h1v1h-1zM56 423h1v1h-1zM177 421h1v1h-1zM376 422h1v1h-1zM140 436h1v1h-1zM79 451h1v1h-1zM164 430h1v1h-1zM191 414h1v1h-1zM109 445h1v1h-1zM206 416h1v1h-1zM63 445h1v1h-1zM237 422h1v1h-1z"/>
<path fill="#00ffff" d="M221 423h1v1h-1zM208 433h1v1h-1zM243 414h1v1h-1zM427 419h1v1h-1zM66 449h1v1h-1zM118 424h1v1h-1zM268 425h1v1h-1zM116 442h1v1h-1zM73 438h1v1h-1zM147 451h1v1h-1zM494 409h1v1h-1zM283 396h1v1h-1zM387 403h1v1h-1zM169 446h1v1h-1zM119 429h1v1h-1zM388 437h1v1h-1zM382 434h1v1h-1zM422 423h1v1h-1zM233 425h1v1h-1zM115 451h1v1h-1zM118 451h1v1h-1zM425 424h1v1h-1zM74 425h1v1h-1zM52 438h1v1h-1zM268 426h1v1h-1zM152 449h1v1h-1zM198 429h1v1h-1zM292 423h1v1h-1zM250 424h1v1h-1zM158 418h1v1h-1zM90 453h1v1h-1zM137 447h1v1h-1zM281 430h1v1h-1zM251 425h1v1h-1zM342 410h1v1h-1zM471 409h1v1h-1zM253 437h1v1h-1zM238 432h1v1h-1zM178 445h1v1h-1zM84 446h1v1h-1zM110 448h1v1h-1zM322 416h1v1h-1zM341 446h1v1h-1zM207 428h1v1h-1z"/>
<path fill="#ffff00" d="M147 436h1v1h-1zM181 441h1v1h-1zM57 466h1v1h-1zM297 426h1v1h-1zM380 421h1v1h-1zM165 457h1v1h-1zM325 444h1v1h-1zM213 435h1v1h-1zM98 443h1v1h-1zM327 431h1v1h-1zM183 457h1v1h-1zM335 449h1v1h-1zM128 484h1v1h-1zM332 427h1v1h-1zM179 445h1v1h-1zM169 451h1v1h-1zM142 484h1v1h-1zM96 443h1v1h-1zM90 465h1v1h-1zM378 432h1v1h-1zM71 447h1v1h-1zM86 448h1v1h-1zM313 447h1v1h-1zM373 439h1v1h-1zM153 459h1v1h-1zM147 435h1v1h-1zM161 450h1v1h-1zM334 484h1v1h-1zM211 430h1v1h-1zM116 438h1v1h-1zM336 429h1v1h-1zM82 469h1v1h-1zM111 445h1v1h-1zM252 435h1v1h-1zM287 483h1v1h-1zM130 445h1v1h-1zM343 421h1v1h-1zM243 442h1v1h-1zM345 437h1v1h-1zM159 483h1v1h-1zM180 448h1v1h-1zM129 454h1v1h-1zM381 438h1v1h-1zM64 456h1v1h-1zM158 452h1v1h-1zM199 449h1v1h-1z"/>
<path fill="#ff0000" d="M96 455h1v1h-1zM368 434h1v1h-1zM170 435h1v1h-1zM56 457h1v1h-1zM129 460h1v1h-1zM129 460h1v1h-1zM62 455h1v1h-1zM328 427h1v1h-1zM113 454h1v1h-1zM184 445h1v1h-1zM357 436h1v1h-1zM362 425h1v1h-1zM424 421h1v1h-1zM297 424h1v1h-1zM206 434h1v1h-1zM95 455h1v1h-1zM255 448h1v1h-1zM111 455h1v1h-1zM183 443h1v1h-1zM366 443h1v1h-1zM76 463h1v1h-1zM262 432h1v1h-1zM64 448h1v1h-1zM228 426h1v1h-1zM64 456h1v1h-1zM109 445h1v1h-1zM356 436h1v1h-1zM130 450h1v1h-1zM299 450h1v1h-1zM226 446h1v1h-1zM73 455h1v1h-1zM314 435h1v1h-1zM243 447h1v1h-1zM190 431h1v1h-1zM88 455h1v1h-1zM217 438h1v1h-1zM242 424h1v1h-1zM92 451h1v1h-1zM103 448h1v1h-1zM85 445h1v1h-1zM452 426h1v1h-1zM84 441h1v1h-1zM101 449h1v1h-1zM145 457h1v1h-1z"/>
<path fill="#00ff00" d="M97 463h1v1h-1zM189 443h1v1h-1zM74 461h1v1h-1zM234 426h1v1h-1zM80 458h1v1h-1zM262 433h1v1h-1zM188 452h1v1h-1zM58 444h1v1h-1zM73 438h1v1h-1zM173 429h1v1h-1zM414 440h1v1h-1zM194 451h1v1h-1zM89 440h1v1h-1zM214 430h1v1h-1zM335 446h1v1h-1zM179 443h1v1h-1zM210 431h1v1h-1zM59 442h1v1h-1zM480 418h1v1h-1zM99 435h1v1h-1zM228 437h1v1h-1zM469 424h1v1h-1zM223 438h1v1h-1zM404 439h1v1h-1zM211 432h1v1h-1zM340 429h1v1h-1zM89 462h1v1h-1zM80 457h1v1h-1zM396 420h1v1h-1zM319 432h1v1h-1zM114 437h1v1h-1zM125 442h1v1h-1zM336 435h1v1h-1zM229 432h1v1h-1zM68 446h1v1h-1zM173 433h1v1h-1zM325 437h1v1h-1zM227 432h1v1h-1zM216 435h1v1h-1zM164 430h1v1h-1zM115 444h1v1h-1zM238 427h1v1h-1zM473 424h1v1h-1zM285 427h1v1h-1z"/>
<path fill="#0080ff" d="M382 422h1v1h-1zM100 424h1v1h-1zM165 432h1v1h-1zM280 414h1v1h-1zM240 421h1v1h-1zM197 433h1v1h-1zM74 442h1v1h-1zM62 429h1v1h-1zM241 435h1v1h-1zM217 420h1v1h-1zM227 418h1v1h-1zM229 428h1v1h-1zM88 439h1v1h-1zM283 406h1v1h-1zM134 424h1v1h-1zM172 420h1v1h-1zM294 415h1v1h-1zM161 442h1v1h-1zM99 424h1v1h-1zM100 431h1v1h-1zM215 430h1v1h-1zM291 415h1v1h-1zM231 414h1v1h-1zM223 426h1v1h-1zM220 431h1v1h-1zM87 418h1v1h-1zM145 430h1v1h-1zM185 412h1v1h-1zM456 395h1v1h-1zM80 426h1v1h-1zM248 434h1v1h-1zM63 444h1v1h-1zM256 424h1v1h-1zM63 437h1v1h-1zM133 417h1v1h-1zM115 442h1v1h-1zM191 416h1v1h-1zM254 437h1v1h-1zM109 414h1v1h-1zM55 437h1v1h-1zM140 439h1v1h-1zM252 417h1v1h-1z"/>
<path fill="#00ffff" d="M335 444h1v1h-1zM430 427h1v1h-1zM54 462h1v1h-1zM98 436h1v1h-1zM183 419h1v1h-1zM188 436h1v1h-1zM380 412h1v1h-1zM127 427h1v1h-1zM115 443h1v1h-1zM175 441h1v1h-1zM142 416h1v1h-1zM221 425h1v1h-1zM380 423h1v1h-1zM220 421h1v1h-1zM275 431h1v1h-1zM258 431h1v1h-1zM159 431h1v1h-1zM311 429h1v1h-1zM118 438h1v1h-1zM302 418h1v1h-1zM66 435h1v1h-1zM385 422h1v1h-1zM67 437h1v1h-1zM173 425h1v1h-1zM116 435h1v1h-1zM101 437h1v1h-1zM188 424h1v1h-1zM104 440h1v1h-1zM357 422h1v1h-1zM228 438h1v1h-1zM72 457h1v1h-1zM416 429h1v1h-1zM278 431h1v1h-1zM50 473h1v1h-1zM417 416h1v1h-1zM119 456h1v1h-1zM249 419h1v1h-1zM107 424h1v1h-1zM398 418h1v1h-1zM293 421h1v1h-1zM128 439h1v1h-1zM416 412h1v1h-1zM249 415h1v1h-1zM61 442h1v1h-1z"/>
<path fill="#ffff00" d="M415 423h1v1h-1zM104 441h1v1h-1zM323 443h1v1h-1zM91 461h1v1h-1zM286 445h1v1h-1zM128 443h1v1h-1zM297 421h1v1h-1zM185 448h1v1h-1zM249 448h1v1h-1zM61 462h1v1h-1zM105 484h1v1h-1zM220 484h1v1h-1zM235 435h1v1h-1zM207 437h1v1h-1zM224 434h1v1h-1zM403 432h1v1h-1zM96 449h1v1h-1zM97 447h1v1h-1zM53 476h1v1h-1zM151 440h1v1h-1zM60 447h1v1h-1zM110 451h1v1h-1zM51 484h1v1h-1zM90 445h1v1h-1zM302 424h1v1h-1zM342 449h1v1h-1zM358 443h1v1h-1zM94 450h1v1h-1zM271 484h1v1h-1zM286 424h1v1h-1zM187 432h1v1h-1zM352 441h1v1h-1zM192 455h1v1h-1zM88 459h1v1h-1zM190 435h1v1h-1zM131 434h1v1h-1zM162 459h1v1h-1zM81 455h1v1h-1zM243 451h1v1h-1zM407 435h1v1h-1zM70 448h1v1h-1zM259 443h1v1h-1zM388 435h1v1h-1zM453 434h1v1h-1zM272 484h1v1h-1zM235 433h1v1h-1z"/>
<path fill="#ff0000" d="M196 427h1v1h-1zM293 447h1v1h-1zM68 465h1v1h-1zM308 434h1v1h-1zM98 460h1v1h-1zM181 460h1v1h-1zM338 427h1v1h-1zM54 466h1v1h-1zM137 432h1v1h-1zM121 446h1v1h-1zM419 435h1v1h-1zM232 448h1v1h-1zM105 452h1v1h-1zM187 446h1v1h-1zM96 440h1v1h-1zM313 451h1v1h-1zM206 444h1v1h-1zM203 431h1v1h-1zM216 431h1v1h-1zM87 458h1v1h-1zM246 424h1v1h-1zM172 433h1v1h-1zM82 444h1v1h-1zM165 435h1v1h-1zM282 442h1v1h-1zM229 432h1v1h-1zM282 434h1v1h-1zM66 460h1v1h-1zM351 434h1v1h-1zM84 467h1v1h-1zM55 459h1v1h-1zM326 432h1v1h-1zM96 457h1v1h-1zM122 437h1v1h-1zM258 448h1v1h-1zM374 426h1v1h-1zM194 435h1v1h-1zM354 434h1v1h-1zM101 461h1v1h-1zM324 439h1v1h-1zM239 444h1v1h-1zM81 463h1v1h-1zM155 454h1v1h-1zM245 443h1v1h-1z"/>
<path fill="#00ff00" d="M243 445h1v1h-1zM239 449h1v1h-1zM310 428h1v1h-1zM253 433h1v1h-1zM91 458h1v1h-1zM93 439h1v1h-1zM171 429h1v1h-1zM75 446h1v1h-1zM163 435h1v1h-1zM56 464h1v1h-1zM135 440h1v1h-1zM284 430h1v1h-1zM140 430h1v1h-1zM61 457h1v1h-1zM129 454h1v1h-1zM87 441h1v1h-1zM161 444h1v1h-1zM184 438h1v1h-1zM187 443h1v1h-1zM92 440h1v1h-1zM260 432h1v1h-1zM91 458h1v1h-1zM62 464h1v1h-1zM198 448h1v1h-1zM250 452h1v1h-1zM300 419h1v1h-1zM111 441h1v1h-1zM311 423h1v1h-1zM190 438h1v1h-1zM234 420h1v1h-1zM159 433h1v1h-1zM201 429h1v1h-1zM107 446h1v1h-1zM298 423h1v1h-1zM208 452h1v1h-1zM120 454h1v1h-1zM75 444h1v1h-1zM368 427h1v1h-1zM209 446h1v1h-1zM80 450h1v1h-1zM177 444h1v1h-1zM140 454h1v1h-1zM221 444h1v1h-1zM257 423h1v1h-1z"/>
<path fill="#0080ff" d="M304 402h1v1h-1zM51 460h1v1h-1zM318 413h1v1h-1zM92 445h1v1h-1zM106 429h1v1h-1zM73 452h1v1h-1zM151 418h1v1h-1zM90 444h1v1h-1zM123 441h1v1h-1zM387 418h1v1h-1zM329 427h1v1h-1zM140 429h1v1h-1zM424 406h1v1h-1zM407 426h1v1h-1zM190 441h1v1h-1zM156 417h1v1h-1zM185 439h1v1h-1zM241 413h1v1h-1zM272 428h1v1h-1zM156 413h1v1h-1zM400 423h1v1h-1zM287 419h1v1h-1zM378 422h1v1h-1zM309 421h1v1h-1zM379 417h1v1h-1zM253 428h1v1h-1zM149 429h1v1h-1zM380 414h1v1h-1zM113 447h1v1h-1zM447 423h1v1h-1zM292 425h1v1h-1zM302 408h1v1h-1zM135 409h1v1h-1zM55 455h1v1h-1zM74 435h1v1h-1zM215 422h1v1h-1zM259 432h1v1h-1zM365 414h1v1h-1zM351 415h1v1h-1zM105 434h1v1h-1zM279 417h1v1h-1zM127 433h1v1h-1z"/>
<path fill="#00ffff" d="M118 430h1v1h-1zM201 430h1v1h-1zM117 435h1v1h-1zM194 409h1v1h-1zM387 402h1v1h-1zM101 454h1v1h-1zM316 439h1v1h-1zM274 436h1v1h-1zM301 431h1v1h-1zM319 420h1v1h-1zM186 441h1v1h-1zM223 446h1v1h-1zM350 434h1v1h-1zM107 444h1v1h-1zM179 430h1v1h-1zM91 438h1v1h-1zM83 451h1v1h-1zM97 405h1v1h-1zM53 442h1v1h-1zM171 436h1v1h-1zM444 424h1v1h-1zM125 441h1v1h-1zM291 437h1v1h-1zM152 440h1v1h-1zM85 433h1v1h-1zM249 425h1v1h-1zM69 457h1v1h-1zM328 420h1v1h-1zM205 423h1v1h-1zM127 439h1v1h-1zM98 450h1v1h-1zM159 430h1v1h-1zM214 427h1v1h-1zM244 446h1v1h-1zM100 455h1v1h-1zM334 421h1v1h-1zM271 418h1v1h-1zM146 428h1v1h-1zM248 431h1v1h-1zM233 416h1v1h-1zM165 426h1v1h-1zM363 414h1v1h-1zM93 457h1v1h-1zM299 416h1v1h-1zM390 255h1v1h-1z"/>
<path fill="#ffff00" d="M338 447h1v1h-1zM224 484h1v1h-1zM73 445h1v1h-1zM181 448h1v1h-1zM330 437h1v1h-1zM181 446h1v1h-1zM203 452h1v1h-1zM255 430h1v1h-1zM104 462h1v1h-1zM237 438h1v1h-1zM229 426h1v1h-1zM166 451h1v1h-1zM76 464h1v1h-1zM350 434h1v1h-1zM54 463h1v1h-1zM189 483h1v1h-1zM204 458h1v1h-1zM241 455h1v1h-1zM111 439h1v1h-1zM160 451h1v1h-1zM213 484h1v1h-1zM124 483h1v1h-1zM102 457h1v1h-1zM239 438h1v1h-1zM379 430h1v1h-1zM89 457h1v1h-1zM171 454h1v1h-1zM194 451h1v1h-1zM274 432h1v1h-1zM144 450h1v1h-1zM299 421h1v1h-1zM366 437h1v1h-1zM214 436h1v1h-1zM55 461h1v1h-1zM129 456h1v1h-1zM219 455h1v1h-1zM113 447h1v1h-1zM135 484h1v1h-1zM268 447h1v1h-1zM134 442h1v1h-1zM71 447h1v1h-1zM205 432h1v1h-1zM304 433h1v1h-1zM58 451h1v1h-1zM127 462h1v1h-1zM106 460h1v1h-1z"/>
<path fill="#ff0000" d="M336 425h1v1h-1zM394 424h1v1h-1zM444 426h1v1h-1zM338 440h1v1h-1zM293 449h1v1h-1zM100 454h1v1h-1zM407 420h1v1h-1zM160 433h1v1h-1zM51 450h1v1h-1zM324 433h1v1h-1zM80 441h1v1h-1zM190 433h1v1h-1zM53 474h1v1h-1zM308 446h1v1h-1zM293 445h1v1h-1zM217 439h1v1h-1zM107 442h1v1h-1zM305 437h1v1h-1zM272 419h1v1h-1zM87 458h1v1h-1zM51 463h1v1h-1zM165 438h1v1h-1zM370 425h1v1h-1zM280 442h1v1h-1zM188 441h1v1h-1zM469 415h1v1h-1zM204 450h1v1h-1zM98 451h1v1h-1zM428 422h1v1h-1zM157 432h1v1h-1zM131 450h1v1h-1zM138 444h1v1h-1zM251 438h1v1h-1zM231 426h1v1h-1zM58 455h1v1h-1zM346 439h1v1h-1zM146 434h1v1h-1zM495 417h1v1h-1zM359 441h1v1h-1zM337 448h1v1h-1zM114 449h1v1h-1zM287 449h1v1h-1zM299 448h1v1h-1zM131 459h1v1h-1z"/>
<path fill="#00ff00" d="M82 444h1v1h-1zM51 448h1v1h-1zM400 427h1v1h-1zM269 433h1v1h-1zM141 442h1v1h-1zM155 444h1v1h-1zM304 445h1v1h-1zM177 450h1v1h-1zM134 449h1v1h-1zM61 461h1v1h-1zM291 433h1v1h-1zM249 447h1v1h-1zM140 443h1v1h-1zM138 458h1v1h-1zM165 429h1v1h-1zM101 452h1v1h-1zM56 448h1v1h-1zM89 442h1v1h-1zM292 429h1v1h-1zM61 454h1v1h-1zM232 432h1v1h-1zM88 455h1v1h-1zM223 445h1v1h-1zM116 436h1v1h-1zM136 441h1v1h-1zM363 427h1v1h-1zM215 447h1v1h-1zM219 443h1v1h-1zM433 435h1v1h-1zM165 450h1v1h-1zM145 444h1v1h-1zM230 444h1v1h-1zM193 433h1v1h-1zM72 448h1v1h-1zM277 425h1v1h-1zM86 446h1v1h-1zM164 446h1v1h-1zM323 439h1v1h-1zM147 442h1v1h-1zM404 435h1v1h-1zM379 422h1v1h-1zM313 425h1v1h-1zM286 425h1v1h-1zM271 445h1v1h-1z"/>
<path fill="#0080ff" d="M376 422h1v1h-1zM271 410h1v1h-1zM266 417h1v1h-1zM133 428h1v1h-1zM91 426h1v1h-1zM242 415h1v1h-1zM164 423h1v1h-1zM115 428h1v1h-1zM129 424h1v1h-1zM301 410h1v1h-1zM176 437h1v1h-1zM467 412h1v1h-1zM383 410h1v1h-1zM336 401h1v1h-1zM229 426h1v1h-1zM341 418h1v1h-1zM346 420h1v1h-1zM229 417h1v1h-1zM73 434h1v1h-1zM110 428h1v1h-1zM134 424h1v1h-1zM354 409h1v1h-1zM318 415h1v1h-1zM92 430h1v1h-1zM140 418h1v1h-1zM189 413h1v1h-1zM171 424h1v1h-1zM205 435h1v1h-1zM347 419h1v1h-1zM309 420h1v1h-1zM102 431h1v1h-1zM93 424h1v1h-1zM152 424h1v1h-1zM303 425h1v1h-1zM123 434h1v1h-1zM327 417h1v1h-1zM70 436h1v1h-1zM153 439h1v1h-1zM90 424h1v1h-1zM421 412h1v1h-1zM309 427h1v1h-1zM200 420h1v1h-1z"/>
<path fill="#00ffff" d="M61 431h1v1h-1zM251 438h1v1h-1zM101 429h1v1h-1zM286 420h1v1h-1zM254 410h1v1h-1zM476 414h1v1h-1zM98 442h1v1h-1zM230 438h1v1h-1zM392 423h1v1h-1zM188 432h1v1h-1zM188 418h1v1h-1zM484 410h1v1h-1zM335 410h1v1h-1zM163 432h1v1h-1zM216 448h1v1h-1zM408 394h1v1h-1zM278 423h1v1h-1zM254 419h1v1h-1zM262 430h1v1h-1zM343 412h1v1h-1zM245 413h1v1h-1zM91 407h1v1h-1zM156 443h1v1h-1zM126 437h1v1h-1zM237 418h1v1h-1zM55 466h1v1h-1zM69 442h1v1h-1zM403 420h1v1h-1zM387 419h1v1h-1zM147 436h1v1h-1zM68 457h1v1h-1zM424 422h1v1h-1zM224 435h1v1h-1zM239 428h1v1h-1zM86 431h1v1h-1zM226 435h1v1h-1zM498 407h1v1h-1zM143 439h1v1h-1zM349 430h1v1h-1zM243 415h1v1h-1zM156 435h1v1h-1zM103 448h1v1h-1zM288 426h1v1h-1zM191 415h1v1h-1z"/>
<path fill="#ffff00" d="M160 438h1v1h-1zM303 444h1v1h-1zM138 449h1v1h-1zM450 427h1v1h-1zM171 447h1v1h-1zM307 423h1v1h-1zM375 440h1v1h-1zM262 425h1v1h-1zM397 442h1v1h-1zM309 435h1v1h-1zM117 438h1v1h-1zM117 458h1v1h-1zM363 445h1v1h-1zM260 434h1v1h-1zM461 431h1v1h-1zM197 442h1v1h-1zM54 459h1v1h-1zM112 439h1v1h-1zM110 463h1v1h-1zM120 460h1v1h-1zM185 455h1v1h-1zM159 443h1v1h-1zM88 451h1v1h-1zM62 454h1v1h-1zM268 448h1v1h-1zM67 463h1v1h-1zM176 452h1v1h-1zM152 460h1v1h-1zM154 434h1v1h-1zM73 468h1v1h-1zM319 484h1v1h-1zM377 438h1v1h-1zM338 440h1v1h-1zM295 435h1v1h-1zM433 435h1v1h-1zM156 440h1v1h-1zM172 443h1v1h-1zM185 432h1v1h-1zM308 433h1v1h-1zM196 450h1v1h-1zM86 456h1v1h-1zM91 463h1v1h-1zM192 484h1v1h-1zM97 446h1v1h-1zM53 473h1v1h-1zM281 432h1v1h-1z"/>
<path fill="#ff0000" d="M114 452h1v1h-1zM220 430h1v1h-1zM61 460h1v1h-1zM58 459h1v1h-1zM120 433h1v1h-1zM118 453h1v1h-1zM347 431h1v1h-1zM254 450h1v1h-1zM328 430h1v1h-1zM374 420h1v1h-1zM103 436h1v1h-1zM82 457h1v1h-1zM147 437h1v1h-1zM278 435h1v1h-1zM151 436h1v1h-1zM82 455h1v1h-1zM219 429h1v1h-1zM333 435h1v1h-1zM63 467h1v1h-1zM464 428h1v1h-1zM321 424h1v1h-1zM436 433h1v1h-1zM91 441h1v1h-1zM107 458h1v1h-1zM303 448h1v1h-1zM225 432h1v1h-1zM119 453h1v1h-1zM172 458h1v1h-1zM127 441h1v1h-1zM338 448h1v1h-1zM77 456h1v1h-1zM360 438h1v1h-1zM239 438h1v1h-1zM352 446h1v1h-1zM172 438h1v1h-1zM78 466h1v1h-1zM391 445h1v1h-1zM99 447h1v1h-1zM449 430h1v1h-1zM138 454h1v1h-1zM346 442h1v1h-1zM200 443h1v1h-1zM84 468h1v1h-1zM131 442h1v1h-1z"/>
<path fill="#00ff00" d="M168 429h1v1h-1zM85 457h1v1h-1zM110 435h1v1h-1zM264 435h1v1h-1zM191 438h1v1h-1zM62 462h1v1h-1zM86 448h1v1h-1zM309 428h1v1h-1zM299 440h1v1h-1zM140 432h1v1h-1zM146 434h1v1h-1zM79 459h1v1h-1zM431 428h1v1h-1zM346 422h1v1h-1zM59 446h1v1h-1zM356 438h1v1h-1zM69 464h1v1h-1zM70 464h1v1h-1zM273 423h1v1h-1zM177 444h1v1h-1zM51 465h1v1h-1zM363 436h1v1h-1zM190 453h1v1h-1zM58 466h1v1h-1zM96 448h1v1h-1zM147 443h1v1h-1zM166 438h1v1h-1zM155 454h1v1h-1zM78 444h1v1h-1zM128 437h1v1h-1zM175 443h1v1h-1zM75 439h1v1h-1zM121 458h1v1h-1zM242 448h1v1h-1zM90 433h1v1h-1zM106 453h1v1h-1zM92 436h1v1h-1zM215 423h1v1h-1zM159 438h1v1h-1zM298 446h1v1h-1zM107 440h1v1h-1zM300 433h1v1h-1zM166 444h1v1h-1zM97 450h1v1h-1z"/>
<path fill="#0080ff" d="M131 415h1v1h-1zM322 428h1v1h-1zM87 432h1v1h-1zM482 417h1v1h-1zM406 404h1v1h-1zM336 429h1v1h-1zM128 427h1v1h-1zM101 430h1v1h-1zM111 435h1v1h-1zM198 427h1v1h-1zM179 438h1v1h-1zM138 421h1v1h-1zM119 433h1v1h-1zM156 411h1v1h-1zM210 418h1v1h-1zM166 421h1v1h-1zM89 442h1v1h-1zM131 433h1v1h-1zM242 404h1v1h-1zM140 446h1v1h-1zM80 426h1v1h-1zM277 415h1v1h-1zM340 424h1v1h-1zM52 449h1v1h-1zM314 432h1v1h-1zM191 429h1v1h-1zM202 420h1v1h-1zM154 417h1v1h-1zM285 411h1v1h-1zM111 429h1v1h-1zM155 419h1v1h-1zM100 426h1v1h-1zM54 458h1v1h-1zM376 397h1v1h-1zM285 410h1v1h-1zM225 434h1v1h-1zM163 432h1v1h-1zM289 405h1v1h-1zM82 418h1v1h-1zM87 439h1v1h-1zM250 435h1v1h-1zM75 447h1v1h-1z"/>
<path fill="#00ffff" d="M118 428h1v1h-1zM240 432h1v1h-1zM71 458h1v1h-1zM95 424h1v1h-1zM274 429h1v1h-1zM130 431h1v1h-1zM113 454h1v1h-1zM83 431h1v1h-1zM427 415h1v1h-1zM284 415h1v1h-1zM187 456h1v1h-1zM199 435h1v1h-1zM95 426h1v1h-1zM259 438h1v1h-1zM122 456h1v1h-1zM113 454h1v1h-1zM81 447h1v1h-1zM98 430h1v1h-1zM175 430h1v1h-1zM285 436h1v1h-1zM221 429h1v1h-1zM78 433h1v1h-1zM74 433h1v1h-1zM257 432h1v1h-1zM74 445h1v1h-1zM51 441h1v1h-1zM161 422h1v1h-1zM296 441h1v1h-1zM151 445h1v1h-1zM228 414h1v1h-1zM230 423h1v1h-1zM220 432h1v1h-1zM214 433h1v1h-1zM175 427h1v1h-1zM125 446h1v1h-1zM138 437h1v1h-1zM449 416h1v1h-1zM269 418h1v1h-1zM163 440h1v1h-1zM407 405h1v1h-1zM85 428h1v1h-1zM161 428h1v1h-1zM217 436h1v1h-1zM167 409h1v1h-1z"/>
<path fill="#ffff00" d="M171 456h1v1h-1zM408 445h1v1h-1zM347 445h1v1h-1zM452 483h1v1h-1zM256 441h1v1h-1zM453 429h1v1h-1zM164 434h1v1h-1zM314 446h1v1h-1zM250 422h1v1h-1zM479 421h1v1h-1zM54 456h1v1h-1zM417 483h1v1h-1zM429 420h1v1h-1zM332 445h1v1h-1zM126 453h1v1h-1zM89 461h1v1h-1zM366 484h1v1h-1zM153 443h1v1h-1zM279 450h1v1h-1zM246 483h1v1h-1zM57 449h1v1h-1zM163 447h1v1h-1zM309 438h1v1h-1zM202 453h1v1h-1zM212 431h1v1h-1zM91 446h1v1h-1zM169 453h1v1h-1zM299 426h1v1h-1zM309 427h1v1h-1zM396 484h1v1h-1zM183 484h1v1h-1zM127 453h1v1h-1zM479 416h1v1h-1zM198 439h1v1h-1zM264 426h1v1h-1zM484 428h1v1h-1zM140 440h1v1h-1zM162 450h1v1h-1zM275 438h1v1h-1zM155 458h1v1h-1zM318 427h1v1h-1zM294 426h1v1h-1zM181 460h1v1h-1zM356 443h1v1h-1zM65 443h1v1h-1zM253 441h1v1h-1z"/>
<path fill="#ff0000" d="M314 436h1v1h-1zM61 465h1v1h-1zM66 452h1v1h-1zM238 443h1v1h-1zM63 455h1v1h-1zM59 442h1v1h-1zM230 446h1v1h-1zM305 447h1v1h-1zM170 446h1v1h-1zM487 436h1v1h-1zM158 435h1v1h-1zM213 445h1v1h-1zM88 453h1v1h-1zM343 429h1v1h-1zM339 432h1v1h-1zM336 444h1v1h-1zM218 438h1v1h-1zM212 427h1v1h-1zM95 446h1v1h-1zM228 452h1v1h-1zM321 447h1v1h-1zM169 435h1v1h-1zM249 428h1v1h-1zM209 429h1v1h-1zM329 438h1v1h-1zM254 446h1v1h-1zM69 449h1v1h-1zM190 452h1v1h-1zM110 455h1v1h-1zM117 459h1v1h-1zM126 450h1v1h-1zM286 439h1v1h-1zM220 430h1v1h-1zM164 449h1v1h-1zM54 446h1v1h-1zM482 422h1v1h-1zM209 457h1v1h-1zM53 448h1v1h-1zM479 436h1v1h-1zM297 434h1v1h-1zM233 446h1v1h-1zM340 429h1v1h-1zM469 415h1v1h-1zM366 441h1v1h-1z"/>
<path fill="#00ff00" d="M150 430h1v1h-1zM98 446h1v1h-1zM92 438h1v1h-1zM168 436h1v1h-1zM94 456h1v1h-1zM93 442h1v1h-1zM420 435h1v1h-1zM250 432h1v1h-1zM88 441h1v1h-1zM129 450h1v1h-1zM148 452h1v1h-1zM276 426h1v1h-1zM216 444h1v1h-1zM358 438h1v1h-1zM206 442h1v1h-1zM462 431h1v1h-1zM68 443h1v1h-1zM93 450h1v1h-1zM268 442h1v1h-1zM506 412h1v1h-1zM483 417h1v1h-1zM177 428h1v1h-1zM129 443h1v1h-1zM140 441h1v1h-1zM94 456h1v1h-1zM150 455h1v1h-1zM62 463h1v1h-1zM465 429h1v1h-1zM175 425h1v1h-1zM165 436h1v1h-1zM188 439h1v1h-1zM208 450h1v1h-1zM82 446h1v1h-1zM285 433h1v1h-1zM341 432h1v1h-1zM60 465h1v1h-1zM59 459h1v1h-1zM178 441h1v1h-1zM192 441h1v1h-1zM82 446h1v1h-1zM128 435h1v1h-1zM289 427h1v1h-1zM346 430h1v1h-1zM135 455h1v1h-1z"/>
<path fill="#0080ff" d="M366 416h1v1h-1zM362 422h1v1h-1zM77 430h1v1h-1zM301 424h1v1h-1zM126 424h1v1h-1zM503 420h1v1h-1zM53 450h1v1h-1zM393 426h1v1h-1zM237 425h1v1h-1zM172 434h1v1h-1zM69 425h1v1h-1zM78 432h1v1h-1zM171 422h1v1h-1zM97 436h1v1h-1zM167 423h1v1h-1zM133 423h1v1h-1zM156 432h1v1h-1zM414 424h1v1h-1zM179 434h1v1h-1zM270 425h1v1h-1zM133 439h1v1h-1zM247 395h1v1h-1zM333 417h1v1h-1zM143 430h1v1h-1zM201 415h1v1h-1zM186 432h1v1h-1zM269 432h1v1h-1zM381 419h1v1h-1zM144 421h1v1h-1zM93 445h1v1h-1zM138 412h1v1h-1zM236 436h1v1h-1zM257 407h1v1h-1zM148 441h1v1h-1zM178 438h1v1h-1zM345 423h1v1h-1zM54 429h1v1h-1zM243 426h1v1h-1zM309 427h1v1h-1zM181 427h1v1h-1zM250 416h1v1h-1zM109 436h1v1h-1z"/>
<path fill="#00ffff" d="M379 420h1v1h-1zM113 427h1v1h-1zM73 452h1v1h-1zM112 437h1v1h-1zM269 428h1v1h-1zM225 434h1v1h-1zM63 441h1v1h-1zM171 434h1v1h-1zM150 427h1v1h-1zM430 426h1v1h-1zM176 425h1v1h-1zM305 416h1v1h-1zM66 445h1v1h-1zM264 418h1v1h-1zM168 432h1v1h-1zM95 433h1v1h-1zM111 446h1v1h-1zM134 425h1v1h-1zM152 441h1v1h-1zM296 419h1v1h-1zM360 410h1v1h-1zM262 431h1v1h-1zM183 443h1v1h-1zM310 436h1v1h-1zM395 435h1v1h-1zM106 449h1v1h-1zM87 456h1v1h-1zM171 437h1v1h-1zM295 408h1v1h-1zM271 437h1v1h-1zM258 441h1v1h-1zM328 437h1v1h-1zM387 439h1v1h-1zM254 419h1v1h-1zM156 433h1v1h-1zM151 427h1v1h-1zM342 425h1v1h-1zM95 430h1v1h-1zM198 436h1v1h-1zM105 444h1v1h-1zM448 411h1v1h-1zM134 447h1v1h-1zM52 463h1v1h-1zM194 434h1v1h-1z"/>
<path fill="#ffff00" d="M211 447h1v1h-1zM441 419h1v1h-1zM66 459h1v1h-1zM102 440h1v1h-1zM185 452h1v1h-1zM274 451h1v1h-1zM178 450h1v1h-1zM337 436h1v1h-1zM380 448h1v1h-1zM78 454h1v1h-1zM102 484h1v1h-1zM463 427h1v1h-1zM145 455h1v1h-1zM328 438h1v1h-1zM64 455h1v1h-1zM144 484h1v1h-1zM130 457h1v1h-1zM112 442h1v1h-1zM339 483h1v1h-1zM194 434h1v1h-1zM78 484h1v1h-1zM229 446h1v1h-1zM176 431h1v1h-1zM159 451h1v1h-1zM146 484h1v1h-1zM252 442h1v1h-1zM158 458h1v1h-1zM236 442h1v1h-1zM97 442h1v1h-1zM217 427h1v1h-1zM139 447h1v1h-1zM335 430h1v1h-1zM280 426h1v1h-1zM92 462h1v1h-1zM156 437h1v1h-1zM214 439h1v1h-1zM123 445h1v1h-1zM102 442h1v1h-1zM62 451h1v1h-1zM224 427h1v1h-1zM260 442h1v1h-1zM469 441h1v1h-1zM290 437h1v1h-1zM74 445h1v1h-1zM252 440h1v1h-1zM204 434h1v1h-1z"/>
<path fill="#ff0000" d="M162 462h1v1h-1zM196 434h1v1h-1zM98 450h1v1h-1zM224 447h1v1h-1zM68 458h1v1h-1zM253 443h1v1h-1zM194 454h1v1h-1zM166 429h1v1h-1zM340 444h1v1h-1zM377 426h1v1h-1zM165 456h1v1h-1zM330 441h1v1h-1zM365 437h1v1h-1zM254 435h1v1h-1zM201 449h1v1h-1zM195 442h1v1h-1zM162 452h1v1h-1zM167 447h1v1h-1zM141 431h1v1h-1zM505 416h1v1h-1zM193 444h1v1h-1zM194 439h1v1h-1zM131 443h1v1h-1zM89 441h1v1h-1zM289 433h1v1h-1zM111 452h1v1h-1zM248 450h1v1h-1zM212 430h1v1h-1zM169 443h1v1h-1zM195 434h1v1h-1zM319 440h1v1h-1zM119 437h1v1h-1zM235 448h1v1h-1zM385 418h1v1h-1zM50 461h1v1h-1zM452 432h1v1h-1zM306 426h1v1h-1zM382 427h1v1h-1zM492 433h1v1h-1zM372 431h1v1h-1zM207 436h1v1h-1zM90 440h1v1h-1zM82 462h1v1h-1zM143 443h1v1h-1z"/>
<path fill="#00ff00" d="M317 435h1v1h-1zM275 427h1v1h-1zM171 433h1v1h-1zM379 442h1v1h-1zM98 454h1v1h-1zM202 445h1v1h-1zM258 424h1v1h-1zM377 421h1v1h-1zM183 441h1v1h-1zM184 430h1v1h-1zM181 440h1v1h-1zM139 438h1v1h-1zM255 428h1v1h-1zM434 438h1v1h-1zM388 435h1v1h-1zM66 454h1v1h-1zM153 440h1v1h-1zM58 450h1v1h-1zM62 442h1v1h-1zM457 426h1v1h-1zM91 438h1v1h-1zM231 432h1v1h-1zM114 456h1v1h-1zM337 425h1v1h-1zM372 440h1v1h-1zM149 449h1v1h-1zM275 427h1v1h-1zM279 439h1v1h-1zM175 453h1v1h-1zM143 436h1v1h-1zM90 442h1v1h-1zM226 429h1v1h-1zM218 443h1v1h-1zM117 458h1v1h-1zM285 449h1v1h-1zM133 439h1v1h-1zM233 426h1v1h-1zM95 446h1v1h-1zM50 468h1v1h-1zM81 458h1v1h-1zM64 455h1v1h-1zM227 446h1v1h-1zM71 442h1v1h-1zM145 452h1v1h-1z"/>
<path fill="#0080ff" d="M149 422h1v1h-1zM89 429h1v1h-1zM169 425h1v1h-1zM221 432h1v1h-1zM283 432h1v1h-1zM173 413h1v1h-1zM287 420h1v1h-1zM335 426h1v1h-1zM458 425h1v1h-1zM192 427h1v1h-1zM57 437h1v1h-1zM51 452h1v1h-1zM116 424h1v1h-1zM298 400h1v1h-1zM108 433h1v1h-1zM155 418h1v1h-1zM131 426h1v1h-1zM223 436h1v1h-1zM330 428h1v1h-1zM379 401h1v1h-1zM119 419h1v1h-1zM147 433h1v1h-1zM122 442h1v1h-1zM190 413h1v1h-1zM126 423h1v1h-1zM358 414h1v1h-1zM155 427h1v1h-1zM256 409h1v1h-1zM51 427h1v1h-1zM358 420h1v1h-1zM128 422h1v1h-1zM484 420h1v1h-1zM137 410h1v1h-1zM67 444h1v1h-1zM209 413h1v1h-1zM195 436h1v1h-1zM241 424h1v1h-1zM151 429h1v1h-1zM187 430h1v1h-1zM342 415h1v1h-1zM86 419h1v1h-1zM439 419h1v1h-1z"/>
<path fill="#00ffff" d="M436 429h1v1h-1zM175 435h1v1h-1zM150 443h1v1h-1zM369 405h1v1h-1zM262 421h1v1h-1zM58 450h1v1h-1zM100 445h1v1h-1zM103 433h1v1h-1zM51 459h1v1h-1zM459 417h1v1h-1zM168 431h1v1h-1zM62 428h1v1h-1zM316 432h1v1h-1zM156 429h1v1h-1zM205 423h1v1h-1zM210 412h1v1h-1zM439 412h1v1h-1zM90 458h1v1h-1zM73 454h1v1h-1zM296 436h1v1h-1zM151 442h1v1h-1zM79 434h1v1h-1zM68 464h1v1h-1zM194 449h1v1h-1zM161 454h1v1h-1zM59 432h1v1h-1zM62 452h1v1h-1zM232 450h1v1h-1zM211 423h1v1h-1zM164 441h1v1h-1zM257 421h1v1h-1zM179 453h1v1h-1zM54 443h1v1h-1zM132 452h1v1h-1zM79 448h1v1h-1zM177 446h1v1h-1zM64 433h1v1h-1zM213 447h1v1h-1zM74 445h1v1h-1zM255 423h1v1h-1zM92 434h1v1h-1zM125 432h1v1h-1zM185 434h1v1h-1zM111 431h1v1h-1z"/>
<path fill="#ffff00" d="M202 447h1v1h-1zM336 443h1v1h-1zM92 460h1v1h-1zM275 451h1v1h-1zM482 484h1v1h-1zM302 433h1v1h-1zM399 437h1v1h-1zM56 469h1v1h-1zM123 450h1v1h-1zM458 431h1v1h-1zM111 458h1v1h-1zM340 445h1v1h-1zM370 426h1v1h-1zM56 449h1v1h-1zM99 454h1v1h-1zM131 439h1v1h-1zM377 423h1v1h-1zM377 424h1v1h-1zM310 448h1v1h-1zM314 428h1v1h-1zM275 433h1v1h-1zM120 457h1v1h-1zM217 450h1v1h-1zM152 453h1v1h-1zM211 441h1v1h-1zM232 431h1v1h-1zM389 433h1v1h-1zM225 442h1v1h-1zM343 447h1v1h-1zM147 454h1v1h-1zM129 433h1v1h-1zM179 453h1v1h-1zM183 444h1v1h-1zM51 452h1v1h-1zM399 484h1v1h-1zM246 450h1v1h-1zM328 432h1v1h-1zM134 445h1v1h-1zM121 461h1v1h-1zM145 439h1v1h-1zM372 432h1v1h-1zM330 433h1v1h-1zM140 456h1v1h-1zM387 423h1v1h-1zM279 449h1v1h-1zM149 460h1v1h-1z"/>
<path fill="#ff0000" d="M109 442h1v1h-1zM117 452h1v1h-1zM154 452h1v1h-1zM83 447h1v1h-1zM311 427h1v1h-1zM274 425h1v1h-1zM86 439h1v1h-1zM130 448h1v1h-1zM335 431h1v1h-1zM51 466h1v1h-1zM180 444h1v1h-1zM68 447h1v1h-1zM112 450h1v1h-1zM345 435h1v1h-1zM60 464h1v1h-1zM207 441h1v1h-1zM168 432h1v1h-1zM429 430h1v1h-1zM168 455h1v1h-1zM293 442h1v1h-1zM61 458h1v1h-1zM175 437h1v1h-1zM87 451h1v1h-1zM230 452h1v1h-1zM206 441h1v1h-1zM426 422h1v1h-1zM77 447h1v1h-1zM63 441h1v1h-1zM105 461h1v1h-1zM66 450h1v1h-1zM131 443h1v1h-1zM197 454h1v1h-1zM78 445h1v1h-1zM89 452h1v1h-1zM60 459h1v1h-1zM289 433h1v1h-1zM216 429h1v1h-1zM294 444h1v1h-1zM285 443h1v1h-1zM154 456h1v1h-1zM59 457h1v1h-1zM68 440h1v1h-1zM101 442h1v1h-1zM68 452h1v1h-1z"/>
<path fill="#00ff00" d="M335 430h1v1h-1zM172 433h1v1h-1zM97 445h1v1h-1zM337 439h1v1h-1zM145 453h1v1h-1zM100 447h1v1h-1zM205 447h1v1h-1zM184 436h1v1h-1zM135 463h1v1h-1zM363 427h1v1h-1zM189 434h1v1h-1zM409 439h1v1h-1zM77 452h1v1h-1zM132 445h1v1h-1zM321 424h1v1h-1zM188 451h1v1h-1zM156 447h1v1h-1zM224 437h1v1h-1zM348 437h1v1h-1zM103 444h1v1h-1zM226 426h1v1h-1zM238 431h1v1h-1zM282 427h1v1h-1zM72 440h1v1h-1zM143 447h1v1h-1zM246 423h1v1h-1zM255 428h1v1h-1zM215 433h1v1h-1zM81 461h1v1h-1zM259 430h1v1h-1zM468 428h1v1h-1zM282 421h1v1h-1zM209 434h1v1h-1zM151 446h1v1h-1zM175 439h1v1h-1zM68 459h1v1h-1zM94 444h1v1h-1zM182 444h1v1h-1zM188 426h1v1h-1zM146 447h1v1h-1zM105 438h1v1h-1zM302 428h1v1h-1zM277 445h1v1h-1zM419 418h1v1h-1z"/>
<path fill="#0080ff" d="M398 418h1v1h-1zM340 431h1v1h-1zM420 418h1v1h-1zM132 422h1v1h-1zM162 419h1v1h-1zM101 431h1v1h-1zM478 419h1v1h-1zM486 412h1v1h-1zM354 398h1v1h-1zM357 418h1v1h-1zM241 414h1v1h-1zM293 405h1v1h-1zM186 425h1v1h-1zM113 421h1v1h-1zM87 426h1v1h-1zM335 425h1v1h-1zM92 428h1v1h-1zM156 410h1v1h-1zM450 416h1v1h-1zM347 421h1v1h-1zM237 416h1v1h-1zM313 421h1v1h-1zM204 417h1v1h-1zM240 428h1v1h-1zM207 402h1v1h-1zM93 452h1v1h-1zM326 398h1v1h-1zM214 423h1v1h-1zM293 402h1v1h-1zM248 415h1v1h-1zM270 433h1v1h-1zM107 433h1v1h-1zM494 409h1v1h-1zM301 433h1v1h-1zM130 430h1v1h-1zM246 406h1v1h-1zM106 411h1v1h-1zM268 428h1v1h-1zM124 442h1v1h-1zM251 417h1v1h-1zM381 408h1v1h-1zM167 425h1v1h-1z"/>
<path fill="#00ffff" d="M82 434h1v1h-1zM228 418h1v1h-1zM317 417h1v1h-1zM127 443h1v1h-1zM412 410h1v1h-1zM60 447h1v1h-1zM241 415h1v1h-1zM117 432h1v1h-1zM422 414h1v1h-1zM173 426h1v1h-1zM159 433h1v1h-1zM142 435h1v1h-1zM254 433h1v1h-1zM103 446h1v1h-1zM371 411h1v1h-1zM462 424h1v1h-1zM88 440h1v1h-1zM425 422h1v1h-1zM385 424h1v1h-1zM456 405h1v1h-1zM68 433h1v1h-1zM95 432h1v1h-1zM285 416h1v1h-1zM94 439h1v1h-1zM86 436h1v1h-1zM317 416h1v1h-1zM138 430h1v1h-1zM131 449h1v1h-1zM146 445h1v1h-1zM310 432h1v1h-1zM201 443h1v1h-1zM219 416h1v1h-1zM484 420h1v1h-1zM96 435h1v1h-1zM260 437h1v1h-1zM197 439h1v1h-1zM488 416h1v1h-1zM231 423h1v1h-1zM74 438h1v1h-1zM323 415h1v1h-1zM159 427h1v1h-1zM331 403h1v1h-1zM234 430h1v1h-1zM171 450h1v1h-1z"/>
<path fill="#ffff00" d="M163 448h1v1h-1zM87 438h1v1h-1zM159 451h1v1h-1zM213 432h1v1h-1zM259 445h1v1h-1zM346 424h1v1h-1zM146 437h1v1h-1zM74 444h1v1h-1zM133 439h1v1h-1zM148 453h1v1h-1zM339 436h1v1h-1zM96 462h1v1h-1zM448 435h1v1h-1zM227 424h1v1h-1zM97 447h1v1h-1zM191 483h1v1h-1zM286 431h1v1h-1zM75 446h1v1h-1zM82 444h1v1h-1zM156 459h1v1h-1zM148 451h1v1h-1zM251 430h1v1h-1zM368 440h1v1h-1zM172 452h1v1h-1zM418 426h1v1h-1zM146 437h1v1h-1zM110 463h1v1h-1zM448 431h1v1h-1zM68 465h1v1h-1zM291 444h1v1h-1zM253 444h1v1h-1zM453 437h1v1h-1zM99 441h1v1h-1zM112 450h1v1h-1zM128 443h1v1h-1zM264 447h1v1h-1zM341 437h1v1h-1zM114 441h1v1h-1zM120 445h1v1h-1zM98 484h1v1h-1zM109 441h1v1h-1zM339 448h1v1h-1zM84 462h1v1h-1zM280 446h1v1h-1zM148 440h1v1h-1zM425 417h1v1h-1z"/>
<path fill="#ff0000" d="M249 432h1v1h-1zM364 432h1v1h-1zM182 442h1v1h-1zM118 452h1v1h-1zM373 423h1v1h-1zM94 441h1v1h-1zM197 435h1v1h-1zM172 434h1v1h-1zM185 442h1v1h-1zM296 436h1v1h-1zM183 439h1v1h-1zM76 452h1v1h-1zM199 450h1v1h-1zM257 434h1v1h-1zM284 435h1v1h-1zM67 464h1v1h-1zM79 439h1v1h-1zM159 440h1v1h-1zM278 435h1v1h-1zM123 445h1v1h-1zM159 455h1v1h-1zM252 428h1v1h-1zM172 452h1v1h-1zM68 453h1v1h-1zM395 427h1v1h-1zM504 432h1v1h-1zM77 464h1v1h-1zM118 444h1v1h-1zM98 434h1v1h-1zM213 446h1v1h-1zM209 453h1v1h-1zM253 449h1v1h-1zM310 422h1v1h-1zM154 449h1v1h-1zM276 435h1v1h-1zM388 426h1v1h-1zM173 448h1v1h-1zM401 428h1v1h-1zM250 451h1v1h-1zM158 445h1v1h-1zM246 454h1v1h-1zM203 447h1v1h-1zM479 426h1v1h-1zM180 450h1v1h-1z"/>
<path fill="#00ff00" d="M141 431h1v1h-1zM217 443h1v1h-1zM245 442h1v1h-1zM244 422h1v1h-1zM187 449h1v1h-1zM432 442h1v1h-1zM180 437h1v1h-1zM219 428h1v1h-1zM304 432h1v1h-1zM134 460h1v1h-1zM181 449h1v1h-1zM338 426h1v1h-1zM181 434h1v1h-1zM231 422h1v1h-1zM166 427h1v1h-1zM325 424h1v1h-1zM203 448h1v1h-1zM174 440h1v1h-1zM267 428h1v1h-1zM374 422h1v1h-1zM91 451h1v1h-1zM161 435h1v1h-1zM120 444h1v1h-1zM182 432h1v1h-1zM191 440h1v1h-1zM182 441h1v1h-1zM78 446h1v1h-1zM185 445h1v1h-1zM228 439h1v1h-1zM52 451h1v1h-1zM184 436h1v1h-1zM91 455h1v1h-1zM52 450h1v1h-1zM193 449h1v1h-1zM145 451h1v1h-1zM239 439h1v1h-1zM316 438h1v1h-1zM376 434h1v1h-1zM258 447h1v1h-1zM62 459h1v1h-1zM376 422h1v1h-1zM226 438h1v1h-1zM130 454h1v1h-1zM379 440h1v1h-1z"/>
<path fill="#0080ff" d="M69 444h1v1h-1zM354 402h1v1h-1zM108 433h1v1h-1zM156 428h1v1h-1zM107 443h1v1h-1zM67 443h1v1h-1zM242 433h1v1h-1zM247 410h1v1h-1zM199 430h1v1h-1zM145 438h1v1h-1zM467 412h1v1h-1zM294 416h1v1h-1zM261 432h1v1h-1zM370 428h1v1h-1zM285 428h1v1h-1zM198 425h1v1h-1zM306 420h1v1h-1zM296 426h1v1h-1zM181 431h1v1h-1zM83 413h1v1h-1zM374 411h1v1h-1zM278 420h1v1h-1zM59 428h1v1h-1zM128 433h1v1h-1zM56 425h1v1h-1zM248 435h1v1h-1zM133 434h1v1h-1zM354 410h1v1h-1zM107 440h1v1h-1zM140 420h1v1h-1zM345 425h1v1h-1zM152 415h1v1h-1zM412 421h1v1h-1zM192 435h1v1h-1zM125 430h1v1h-1zM210 430h1v1h-1zM74 442h1v1h-1zM257 440h1v1h-1zM271 415h1v1h-1zM200 417h1v1h-1zM136 427h1v1h-1zM247 433h1v1h-1z"/>
<path fill="#00ffff" d="M52 460h1v1h-1zM252 419h1v1h-1zM190 430h1v1h-1zM248 424h1v1h-1zM120 451h1v1h-1zM185 419h1v1h-1zM106 430h1v1h-1zM220 445h1v1h-1zM118 421h1v1h-1zM362 427h1v1h-1zM321 428h1v1h-1zM180 440h1v1h-1zM80 453h1v1h-1zM61 462h1v1h-1zM339 439h1v1h-1zM113 449h1v1h-1zM137 448h1v1h-1zM201 431h1v1h-1zM135 435h1v1h-1zM249 440h1v1h-1zM68 441h1v1h-1zM371 432h1v1h-1zM269 426h1v1h-1zM69 449h1v1h-1zM261 423h1v1h-1zM98 435h1v1h-1zM244 404h1v1h-1zM243 430h1v1h-1zM143 445h1v1h-1zM335 430h1v1h-1zM240 420h1v1h-1zM144 449h1v1h-1zM306 388h1v1h-1zM417 415h1v1h-1zM283 428h1v1h-1zM181 426h1v1h-1zM377 415h1v1h-1zM58 440h1v1h-1zM221 414h1v1h-1zM156 445h1v1h-1zM394 417h1v1h-1zM100 434h1v1h-1zM93 434h1v1h-1zM101 449h1v1h-1z"/>
<path fill="#ffff00" d="M118 454h1v1h-1zM192 453h1v1h-1zM347 424h1v1h-1zM279 445h1v1h-1zM177 439h1v1h-1zM77 449h1v1h-1zM273 447h1v1h-1zM51 452h1v1h-1zM136 457h1v1h-1zM337 446h1v1h-1zM303 484h1v1h-1zM260 449h1v1h-1zM122 455h1v1h-1zM117 450h1v1h-1zM166 451h1v1h-1zM147 450h1v1h-1zM411 425h1v1h-1zM194 440h1v1h-1zM204 450h1v1h-1zM205 440h1v1h-1zM209 430h1v1h-1zM186 444h1v1h-1zM93 483h1v1h-1zM227 438h1v1h-1zM277 434h1v1h-1zM73 445h1v1h-1zM120 459h1v1h-1zM416 442h1v1h-1zM112 448h1v1h-1zM142 451h1v1h-1zM226 445h1v1h-1zM403 441h1v1h-1zM306 451h1v1h-1zM373 432h1v1h-1zM96 453h1v1h-1zM126 452h1v1h-1zM328 484h1v1h-1zM79 465h1v1h-1zM238 454h1v1h-1zM66 467h1v1h-1zM112 484h1v1h-1zM227 484h1v1h-1zM317 447h1v1h-1zM178 436h1v1h-1zM101 446h1v1h-1zM348 483h1v1h-1z"/>
<path fill="#ff0000" d="M94 459h1v1h-1zM92 453h1v1h-1zM374 448h1v1h-1zM146 436h1v1h-1zM111 446h1v1h-1zM129 452h1v1h-1zM118 452h1v1h-1zM134 452h1v1h-1zM167 447h1v1h-1zM129 449h1v1h-1zM296 445h1v1h-1zM311 428h1v1h-1zM493 437h1v1h-1zM171 440h1v1h-1zM222 447h1v1h-1zM424 425h1v1h-1zM461 428h1v1h-1zM398 418h1v1h-1zM310 437h1v1h-1zM185 451h1v1h-1zM258 441h1v1h-1zM401 420h1v1h-1zM84 442h1v1h-1zM257 438h1v1h-1zM129 447h1v1h-1zM136 441h1v1h-1zM126 459h1v1h-1zM457 420h1v1h-1zM355 439h1v1h-1zM67 448h1v1h-1zM278 444h1v1h-1zM154 436h1v1h-1zM423 424h1v1h-1zM56 447h1v1h-1zM236 433h1v1h-1zM362 446h1v1h-1zM104 464h1v1h-1zM349 423h1v1h-1zM90 445h1v1h-1zM244 428h1v1h-1zM60 457h1v1h-1zM114 436h1v1h-1zM151 439h1v1h-1zM198 430h1v1h-1z"/>
<path fill="#00ff00" d="M107 457h1v1h-1zM386 420h1v1h-1zM84 444h1v1h-1zM290 440h1v1h-1zM195 429h1v1h-1zM198 450h1v1h-1zM376 429h1v1h-1zM160 453h1v1h-1zM386 436h1v1h-1zM193 447h1v1h-1zM482 422h1v1h-1zM385 416h1v1h-1zM104 448h1v1h-1zM413 435h1v1h-1zM75 447h1v1h-1zM419 443h1v1h-1zM167 448h1v1h-1zM121 452h1v1h-1zM77 462h1v1h-1zM109 451h1v1h-1zM214 443h1v1h-1zM345 444h1v1h-1zM235 452h1v1h-1zM228 443h1v1h-1zM64 457h1v1h-1zM491 435h1v1h-1zM232 441h1v1h-1zM210 432h1v1h-1zM265 446h1v1h-1zM132 435h1v1h-1zM175 442h1v1h-1zM119 454h1v1h-1zM182 436h1v1h-1zM457 417h1v1h-1zM103 438h1v1h-1zM223 427h1v1h-1zM311 431h1v1h-1zM421 431h1v1h-1zM215 441h1v1h-1zM184 448h1v1h-1zM244 440h1v1h-1zM53 465h1v1h-1zM125 454h1v1h-1zM266 434h1v1h-1z"/>
<path fill="#0080ff" d="M210 432h1v1h-1zM203 418h1v1h-1zM160 438h1v1h-1zM360 419h1v1h-1zM267 423h1v1h-1zM316 413h1v1h-1zM273 424h1v1h-1zM306 415h1v1h-1zM160 436h1v1h-1zM168 431h1v1h-1zM138 417h1v1h-1zM236 427h1v1h-1zM72 442h1v1h-1zM108 419h1v1h-1zM170 441h1v1h-1zM220 423h1v1h-1zM156 410h1v1h-1zM186 421h1v1h-1zM81 445h1v1h-1zM226 409h1v1h-1zM264 420h1v1h-1zM160 432h1v1h-1zM151 430h1v1h-1zM259 432h1v1h-1zM359 426h1v1h-1zM194 433h1v1h-1zM375 427h1v1h-1zM58 437h1v1h-1zM83 454h1v1h-1zM314 431h1v1h-1zM242 412h1v1h-1zM85 442h1v1h-1zM91 425h1v1h-1zM272 423h1v1h-1zM244 426h1v1h-1zM167 433h1v1h-1zM91 449h1v1h-1zM231 409h1v1h-1zM309 412h1v1h-1zM217 421h1v1h-1zM217 429h1v1h-1zM152 427h1v1h-1z"/>
<path fill="#00ffff" d="M227 444h1v1h-1zM93 451h1v1h-1zM184 444h1v1h-1zM219 424h1v1h-1zM96 438h1v1h-1zM319 422h1v1h-1zM258 426h1v1h-1zM147 453h1v1h-1zM365 415h1v1h-1zM340 427h1v1h-1zM311 424h1v1h-1zM241 431h1v1h-1zM74 439h1v1h-1zM349 425h1v1h-1zM392 437h1v1h-1zM131 439h1v1h-1zM272 433h1v1h-1zM166 444h1v1h-1zM59 452h1v1h-1zM150 449h1v1h-1zM353 443h1v1h-1zM110 433h1v1h-1zM209 415h1v1h-1zM280 419h1v1h-1zM227 431h1v1h-1zM338 412h1v1h-1zM142 427h1v1h-1zM87 426h1v1h-1zM132 440h1v1h-1zM453 412h1v1h-1zM219 434h1v1h-1zM69 457h1v1h-1zM213 416h1v1h-1zM89 452h1v1h-1zM181 442h1v1h-1zM206 439h1v1h-1zM370 426h1v1h-1zM179 437h1v1h-1zM283 439h1v1h-1zM149 445h1v1h-1zM76 445h1v1h-1zM275 434h1v1h-1zM126 424h1v1h-1zM391 429h1v1h-1z"/>
<path fill="#ffff00" d="M110 460h1v1h-1zM92 483h1v1h-1zM73 456h1v1h-1zM376 447h1v1h-1zM225 448h1v1h-1zM442 440h1v1h-1zM87 484h1v1h-1zM113 462h1v1h-1zM231 435h1v1h-1zM189 435h1v1h-1zM328 423h1v1h-1zM478 422h1v1h-1zM86 484h1v1h-1zM304 484h1v1h-1zM94 444h1v1h-1zM178 438h1v1h-1zM380 433h1v1h-1zM126 451h1v1h-1zM202 449h1v1h-1zM82 457h1v1h-1zM354 430h1v1h-1zM162 442h1v1h-1zM251 434h1v1h-1zM379 443h1v1h-1zM283 450h1v1h-1zM260 437h1v1h-1zM59 459h1v1h-1zM186 452h1v1h-1zM404 484h1v1h-1zM331 425h1v1h-1zM481 425h1v1h-1zM286 430h1v1h-1zM190 441h1v1h-1zM377 445h1v1h-1zM217 444h1v1h-1zM131 464h1v1h-1zM227 426h1v1h-1zM271 453h1v1h-1zM417 445h1v1h-1zM69 467h1v1h-1zM77 441h1v1h-1zM86 464h1v1h-1zM298 452h1v1h-1zM196 437h1v1h-1zM67 484h1v1h-1zM107 453h1v1h-1z"/>
<path fill="#ff0000" d="M239 441h1v1h-1zM79 449h1v1h-1zM113 454h1v1h-1zM261 435h1v1h-1zM405 441h1v1h-1zM152 456h1v1h-1zM343 425h1v1h-1zM57 466h1v1h-1zM403 433h1v1h-1zM172 429h1v1h-1zM214 436h1v1h-1zM73 455h1v1h-1zM209 440h1v1h-1zM296 440h1v1h-1zM233 434h1v1h-1zM298 429h1v1h-1zM196 455h1v1h-1zM122 460h1v1h-1zM137 458h1v1h-1zM231 421h1v1h-1zM184 446h1v1h-1zM99 457h1v1h-1zM133 454h1v1h-1zM197 428h1v1h-1zM259 452h1v1h-1zM117 445h1v1h-1zM240 440h1v1h-1zM95 456h1v1h-1zM114 443h1v1h-1zM243 436h1v1h-1zM249 448h1v1h-1zM86 446h1v1h-1zM173 446h1v1h-1zM387 446h1v1h-1zM80 462h1v1h-1zM250 441h1v1h-1zM78 452h1v1h-1zM180 436h1v1h-1zM290 425h1v1h-1zM173 433h1v1h-1zM114 453h1v1h-1zM58 446h1v1h-1zM296 432h1v1h-1zM238 448h1v1h-1z"/>
<path fill="#00ff00" d="M65 455h1v1h-1zM172 433h1v1h-1zM402 434h1v1h-1zM131 441h1v1h-1zM214 436h1v1h-1zM78 459h1v1h-1zM150 428h1v1h-1zM456 419h1v1h-1zM99 440h1v1h-1zM201 439h1v1h-1zM302 435h1v1h-1zM113 459h1v1h-1zM152 434h1v1h-1zM59 446h1v1h-1zM166 446h1v1h-1zM342 437h1v1h-1zM149 432h1v1h-1zM228 434h1v1h-1zM256 445h1v1h-1zM188 442h1v1h-1zM87 460h1v1h-1zM68 448h1v1h-1zM356 443h1v1h-1zM341 419h1v1h-1zM164 431h1v1h-1zM264 438h1v1h-1zM215 429h1v1h-1zM240 434h1v1h-1zM383 418h1v1h-1zM60 445h1v1h-1zM325 429h1v1h-1zM284 424h1v1h-1zM214 426h1v1h-1zM65 456h1v1h-1zM164 447h1v1h-1zM165 444h1v1h-1zM80 453h1v1h-1zM111 448h1v1h-1zM193 437h1v1h-1zM57 438h1v1h-1zM143 445h1v1h-1zM120 444h1v1h-1zM181 440h1v1h-1zM181 446h1v1h-1z"/>
<path fill="#0080ff" d="M294 402h1v1h-1zM385 407h1v1h-1zM279 376h1v1h-1zM274 413h1v1h-1zM181 427h1v1h-1zM339 426h1v1h-1zM122 431h1v1h-1zM242 432h1v1h-1zM135 419h1v1h-1zM177 413h1v1h-1zM194 412h1v1h-1zM81 433h1v1h-1zM206 416h1v1h-1zM293 421h1v1h-1zM103 435h1v1h-1zM400 415h1v1h-1zM220 423h1v1h-1zM144 429h1v1h-1zM141 438h1v1h-1zM146 420h1v1h-1zM110 417h1v1h-1zM212 431h1v1h-1zM147 427h1v1h-1zM130 429h1v1h-1zM290 421h1v1h-1zM382 424h1v1h-1zM128 447h1v1h-1zM115 409h1v1h-1zM289 411h1v1h-1zM321 427h1v1h-1zM408 422h1v1h-1zM114 443h1v1h-1zM238 419h1v1h-1zM68 444h1v1h-1zM170 435h1v1h-1zM201 430h1v1h-1zM409 410h1v1h-1zM165 422h1v1h-1zM173 435h1v1h-1zM104 442h1v1h-1zM308 416h1v1h-1zM162 441h1v1h-1z"/>
<path fill="#00ffff" d="M276 431h1v1h-1zM292 407h1v1h-1zM245 434h1v1h-1zM443 433h1v1h-1zM214 446h1v1h-1zM291 426h1v1h-1zM467 418h1v1h-1zM108 445h1v1h-1zM154 438h1v1h-1zM173 420h1v1h-1zM211 439h1v1h-1zM238 424h1v1h-1zM319 423h1v1h-1zM53 447h1v1h-1zM229 432h1v1h-1zM315 433h1v1h-1zM97 433h1v1h-1zM196 417h1v1h-1zM102 448h1v1h-1zM493 397h1v1h-1zM269 441h1v1h-1zM385 421h1v1h-1zM217 446h1v1h-1zM293 433h1v1h-1zM324 421h1v1h-1zM163 430h1v1h-1zM170 427h1v1h-1zM274 428h1v1h-1zM366 418h1v1h-1zM88 436h1v1h-1zM148 439h1v1h-1zM100 449h1v1h-1zM151 433h1v1h-1zM207 432h1v1h-1zM342 426h1v1h-1zM74 463h1v1h-1zM378 420h1v1h-1zM231 409h1v1h-1zM285 437h1v1h-1zM411 426h1v1h-1zM255 436h1v1h-1zM173 439h1v1h-1zM172 442h1v1h-1zM199 427h1v1h-1z"/>
<path fill="#ffff00" d="M423 426h1v1h-1zM177 454h1v1h-1zM186 443h1v1h-1zM212 451h1v1h-1zM335 429h1v1h-1zM203 447h1v1h-1zM123 484h1v1h-1zM229 484h1v1h-1zM284 442h1v1h-1zM308 442h1v1h-1zM75 464h1v1h-1zM198 437h1v1h-1zM208 436h1v1h-1zM101 449h1v1h-1zM263 435h1v1h-1zM208 448h1v1h-1zM199 431h1v1h-1zM220 440h1v1h-1zM194 483h1v1h-1zM228 430h1v1h-1zM182 453h1v1h-1zM69 459h1v1h-1zM324 439h1v1h-1zM252 433h1v1h-1zM217 450h1v1h-1zM129 463h1v1h-1zM343 426h1v1h-1zM177 431h1v1h-1zM246 441h1v1h-1zM275 430h1v1h-1zM280 436h1v1h-1zM144 436h1v1h-1zM99 484h1v1h-1zM76 484h1v1h-1zM285 432h1v1h-1zM315 441h1v1h-1zM314 440h1v1h-1zM93 458h1v1h-1zM74 448h1v1h-1zM452 419h1v1h-1zM107 440h1v1h-1zM235 432h1v1h-1zM341 443h1v1h-1zM469 431h1v1h-1zM128 452h1v1h-1zM223 452h1v1h-1z"/>
<path fill="#ff0000" d="M361 439h1v1h-1zM303 443h1v1h-1zM280 435h1v1h-1zM136 439h1v1h-1zM446 424h1v1h-1zM84 454h1v1h-1zM354 444h1v1h-1zM56 468h1v1h-1zM289 429h1v1h-1zM69 469h1v1h-1zM315 435h1v1h-1zM222 438h1v1h-1zM265 438h1v1h-1zM91 450h1v1h-1zM186 456h1v1h-1zM258 431h1v1h-1zM260 432h1v1h-1zM230 450h1v1h-1zM194 438h1v1h-1zM77 464h1v1h-1zM153 431h1v1h-1zM228 448h1v1h-1zM105 443h1v1h-1zM72 448h1v1h-1zM169 439h1v1h-1zM304 437h1v1h-1zM136 457h1v1h-1zM436 418h1v1h-1zM104 454h1v1h-1zM250 440h1v1h-1zM264 446h1v1h-1zM362 427h1v1h-1zM168 454h1v1h-1zM242 455h1v1h-1zM94 469h1v1h-1zM194 454h1v1h-1zM426 438h1v1h-1zM245 441h1v1h-1zM201 448h1v1h-1zM53 456h1v1h-1zM142 450h1v1h-1zM203 455h1v1h-1zM384 443h1v1h-1zM148 450h1v1h-1z"/>
<path fill="#00ff00" d="M382 421h1v1h-1zM392 434h1v1h-1zM249 446h1v1h-1zM282 426h1v1h-1zM418 419h1v1h-1zM345 425h1v1h-1zM153 450h1v1h-1zM172 436h1v1h-1zM82 455h1v1h-1zM158 431h1v1h-1zM160 442h1v1h-1zM287 447h1v1h-1zM241 449h1v1h-1zM359 433h1v1h-1zM92 463h1v1h-1zM101 452h1v1h-1zM95 452h1v1h-1zM73 458h1v1h-1zM209 443h1v1h-1zM191 433h1v1h-1zM52 452h1v1h-1zM329 433h1v1h-1zM130 445h1v1h-1zM256 437h1v1h-1zM78 444h1v1h-1zM409 438h1v1h-1zM299 432h1v1h-1zM291 438h1v1h-1zM363 438h1v1h-1zM134 447h1v1h-1zM178 430h1v1h-1zM64 442h1v1h-1zM53 457h1v1h-1zM173 454h1v1h-1zM364 426h1v1h-1zM71 459h1v1h-1zM489 439h1v1h-1zM148 444h1v1h-1zM366 426h1v1h-1zM72 455h1v1h-1zM115 454h1v1h-1zM222 444h1v1h-1zM57 448h1v1h-1zM161 453h1v1h-1z"/>
<path fill="#0080ff" d="M442 419h1v1h-1zM191 413h1v1h-1zM145 422h1v1h-1zM308 432h1v1h-1zM352 411h1v1h-1zM136 438h1v1h-1zM83 424h1v1h-1zM309 418h1v1h-1zM201 424h1v1h-1zM98 417h1v1h-1zM237 438h1v1h-1zM472 408h1v1h-1zM336 410h1v1h-1zM114 437h1v1h-1zM99 431h1v1h-1zM227 433h1v1h-1zM415 420h1v1h-1zM281 430h1v1h-1zM229 429h1v1h-1zM331 407h1v1h-1zM64 450h1v1h-1zM212 435h1v1h-1zM124 422h1v1h-1zM296 390h1v1h-1zM67 436h1v1h-1zM203 419h1v1h-1zM259 419h1v1h-1zM431 403h1v1h-1zM109 410h1v1h-1zM178 429h1v1h-1zM89 427h1v1h-1zM102 404h1v1h-1zM132 415h1v1h-1zM353 415h1v1h-1zM244 430h1v1h-1zM114 448h1v1h-1zM97 440h1v1h-1zM152 417h1v1h-1zM69 443h1v1h-1zM473 412h1v1h-1zM94 428h1v1h-1zM195 425h1v1h-1z"/>
<path fill="#00ffff" d="M224 422h1v1h-1zM244 425h1v1h-1zM105 437h1v1h-1zM307 413h1v1h-1zM82 436h1v1h-1zM286 427h1v1h-1zM416 427h1v1h-1zM208 448h1v1h-1zM174 434h1v1h-1zM144 418h1v1h-1zM122 425h1v1h-1zM152 441h1v1h-1zM265 424h1v1h-1zM90 461h1v1h-1zM129 428h1v1h-1zM143 425h1v1h-1zM309 419h1v1h-1zM308 445h1v1h-1zM353 410h1v1h-1zM186 432h1v1h-1zM68 452h1v1h-1zM336 422h1v1h-1zM75 446h1v1h-1zM430 432h1v1h-1zM69 447h1v1h-1zM166 427h1v1h-1zM115 447h1v1h-1zM104 437h1v1h-1zM107 429h1v1h-1zM334 424h1v1h-1zM104 435h1v1h-1zM183 450h1v1h-1zM127 431h1v1h-1zM83 446h1v1h-1zM173 422h1v1h-1zM182 437h1v1h-1zM337 438h1v1h-1zM171 429h1v1h-1zM143 433h1v1h-1zM304 433h1v1h-1zM356 434h1v1h-1zM136 453h1v1h-1zM129 426h1v1h-1zM314 424h1v1h-1z"/>
<path fill="#ffff00" d="M255 436h1v1h-1zM55 450h1v1h-1zM316 450h1v1h-1zM380 483h1v1h-1zM76 452h1v1h-1zM89 465h1v1h-1zM67 447h1v1h-1zM239 426h1v1h-1zM249 439h1v1h-1zM408 422h1v1h-1zM144 452h1v1h-1zM291 450h1v1h-1zM299 424h1v1h-1zM340 432h1v1h-1zM86 457h1v1h-1zM92 456h1v1h-1zM465 438h1v1h-1zM231 451h1v1h-1zM169 454h1v1h-1zM188 442h1v1h-1zM351 444h1v1h-1zM305 442h1v1h-1zM240 439h1v1h-1zM186 484h1v1h-1zM134 454h1v1h-1zM422 431h1v1h-1zM458 427h1v1h-1zM107 440h1v1h-1zM461 419h1v1h-1zM191 434h1v1h-1zM357 423h1v1h-1zM149 484h1v1h-1zM175 448h1v1h-1zM58 459h1v1h-1zM341 444h1v1h-1zM76 452h1v1h-1zM207 453h1v1h-1zM133 433h1v1h-1zM333 427h1v1h-1zM314 424h1v1h-1zM364 427h1v1h-1zM234 437h1v1h-1zM220 483h1v1h-1zM318 426h1v1h-1zM99 464h1v1h-1zM108 461h1v1h-1z"/>
<path fill="#ff0000" d="M144 436h1v1h-1zM127 454h1v1h-1zM73 460h1v1h-1zM234 430h1v1h-1zM328 444h1v1h-1zM381 416h1v1h-1zM327 422h1v1h-1zM304 435h1v1h-1zM286 444h1v1h-1zM310 431h1v1h-1zM125 436h1v1h-1zM225 443h1v1h-1zM324 435h1v1h-1zM204 430h1v1h-1zM80 461h1v1h-1zM141 447h1v1h-1zM142 443h1v1h-1zM334 442h1v1h-1zM312 423h1v1h-1zM123 440h1v1h-1zM464 438h1v1h-1zM153 452h1v1h-1zM268 429h1v1h-1zM342 421h1v1h-1zM190 455h1v1h-1zM308 442h1v1h-1zM54 470h1v1h-1zM343 419h1v1h-1zM141 444h1v1h-1zM120 454h1v1h-1zM102 442h1v1h-1zM332 432h1v1h-1zM342 429h1v1h-1zM90 436h1v1h-1zM280 438h1v1h-1zM250 428h1v1h-1zM361 427h1v1h-1zM77 462h1v1h-1zM352 437h1v1h-1zM144 434h1v1h-1zM271 427h1v1h-1zM103 458h1v1h-1zM171 444h1v1h-1zM109 460h1v1h-1z"/>
<path fill="#00ff00" d="M174 425h1v1h-1zM187 449h1v1h-1zM225 428h1v1h-1zM152 440h1v1h-1zM267 444h1v1h-1zM156 443h1v1h-1zM96 457h1v1h-1zM194 430h1v1h-1zM203 427h1v1h-1zM315 442h1v1h-1zM129 433h1v1h-1zM313 442h1v1h-1zM76 447h1v1h-1zM124 438h1v1h-1zM214 438h1v1h-1zM288 439h1v1h-1zM237 428h1v1h-1zM89 456h1v1h-1zM55 464h1v1h-1zM105 452h1v1h-1zM260 429h1v1h-1zM239 426h1v1h-1zM54 449h1v1h-1zM209 450h1v1h-1zM297 429h1v1h-1zM309 441h1v1h-1zM264 447h1v1h-1zM316 423h1v1h-1zM189 427h1v1h-1zM77 442h1v1h-1zM113 432h1v1h-1zM206 431h1v1h-1zM165 430h1v1h-1zM93 438h1v1h-1zM284 428h1v1h-1zM126 438h1v1h-1zM168 455h1v1h-1zM353 432h1v1h-1zM283 448h1v1h-1zM210 430h1v1h-1zM108 446h1v1h-1zM143 452h1v1h-1zM226 435h1v1h-1zM68 461h1v1h-1z"/>
<path fill="#0080ff" d="M99 432h1v1h-1zM70 436h1v1h-1zM228 431h1v1h-1zM97 401h1v1h-1zM182 434h1v1h-1zM410 407h1v1h-1zM313 427h1v1h-1zM440 416h1v1h-1zM74 444h1v1h-1zM275 413h1v1h-1zM407 403h1v1h-1zM78 445h1v1h-1zM161 412h1v1h-1zM176 437h1v1h-1zM107 417h1v1h-1zM391 423h1v1h-1zM326 422h1v1h-1zM86 428h1v1h-1zM250 432h1v1h-1zM123 432h1v1h-1zM126 442h1v1h-1zM52 425h1v1h-1zM312 418h1v1h-1zM61 457h1v1h-1zM69 433h1v1h-1zM196 388h1v1h-1zM246 414h1v1h-1zM343 407h1v1h-1zM426 384h1v1h-1zM206 435h1v1h-1zM186 420h1v1h-1zM247 413h1v1h-1zM109 436h1v1h-1zM101 431h1v1h-1zM225 406h1v1h-1zM180 424h1v1h-1zM186 429h1v1h-1zM323 400h1v1h-1zM332 400h1v1h-1zM116 424h1v1h-1zM347 410h1v1h-1zM80 428h1v1h-1z"/>
<path fill="#00ffff" d="M109 443h1v1h-1zM254 432h1v1h-1zM102 448h1v1h-1zM189 438h1v1h-1zM172 431h1v1h-1zM368 415h1v1h-1zM130 448h1v1h-1zM284 442h1v1h-1zM84 443h1v1h-1zM186 444h1v1h-1zM164 441h1v1h-1zM60 440h1v1h-1zM102 407h1v1h-1zM385 425h1v1h-1zM51 446h1v1h-1zM116 441h1v1h-1zM57 432h1v1h-1zM218 444h1v1h-1zM53 456h1v1h-1zM107 428h1v1h-1zM102 446h1v1h-1zM317 435h1v1h-1zM54 466h1v1h-1zM254 435h1v1h-1zM99 438h1v1h-1zM135 415h1v1h-1zM386 422h1v1h-1zM168 425h1v1h-1zM60 452h1v1h-1zM255 422h1v1h-1zM114 436h1v1h-1zM181 441h1v1h-1zM408 420h1v1h-1zM108 416h1v1h-1zM363 436h1v1h-1zM91 433h1v1h-1zM51 459h1v1h-1zM194 422h1v1h-1zM161 430h1v1h-1zM271 427h1v1h-1zM455 439h1v1h-1zM295 434h1v1h-1zM375 422h1v1h-1zM118 425h1v1h-1z"/>
<path fill="#ffff00" d="M161 444h1v1h-1zM277 440h1v1h-1zM322 437h1v1h-1zM202 451h1v1h-1zM96 464h1v1h-1zM89 461h1v1h-1zM56 466h1v1h-1zM58 469h1v1h-1zM184 450h1v1h-1zM73 452h1v1h-1zM169 442h1v1h-1zM112 443h1v1h-1zM94 460h1v1h-1zM115 441h1v1h-1zM281 440h1v1h-1zM273 435h1v1h-1zM95 465h1v1h-1zM102 462h1v1h-1zM275 440h1v1h-1zM174 456h1v1h-1zM219 447h1v1h-1zM467 444h1v1h-1zM406 425h1v1h-1zM294 448h1v1h-1zM181 444h1v1h-1zM120 461h1v1h-1zM260 437h1v1h-1zM145 444h1v1h-1zM53 476h1v1h-1zM131 448h1v1h-1zM72 469h1v1h-1zM233 435h1v1h-1zM250 445h1v1h-1zM138 461h1v1h-1zM247 423h1v1h-1zM223 439h1v1h-1zM223 443h1v1h-1zM236 431h1v1h-1zM52 450h1v1h-1zM182 454h1v1h-1zM147 455h1v1h-1zM283 430h1v1h-1zM290 443h1v1h-1zM291 438h1v1h-1zM312 429h1v1h-1zM391 446h1v1h-1z"/>
<path fill="#ff0000" d="M111 453h1v1h-1zM70 470h1v1h-1zM159 438h1v1h-1zM101 448h1v1h-1zM152 439h1v1h-1zM110 459h1v1h-1zM195 434h1v1h-1zM355 425h1v1h-1zM194 447h1v1h-1zM188 435h1v1h-1zM181 448h1v1h-1zM466 432h1v1h-1zM188 445h1v1h-1zM93 445h1v1h-1zM302 440h1v1h-1zM193 456h1v1h-1zM138 461h1v1h-1zM382 442h1v1h-1zM224 444h1v1h-1zM127 446h1v1h-1zM405 431h1v1h-1zM159 431h1v1h-1zM197 432h1v1h-1zM143 441h1v1h-1zM116 445h1v1h-1zM243 452h1v1h-1zM123 461h1v1h-1zM115 454h1v1h-1zM158 445h1v1h-1zM63 445h1v1h-1zM78 449h1v1h-1zM252 448h1v1h-1zM143 439h1v1h-1zM296 442h1v1h-1zM160 453h1v1h-1zM315 448h1v1h-1zM224 441h1v1h-1zM87 447h1v1h-1zM167 456h1v1h-1zM57 451h1v1h-1zM296 448h1v1h-1zM269 421h1v1h-1zM58 455h1v1h-1zM434 427h1v1h-1z"/>
<path fill="#00ff00" d="M189 446h1v1h-1zM295 431h1v1h-1zM176 439h1v1h-1zM206 453h1v1h-1zM66 446h1v1h-1zM62 456h1v1h-1zM215 448h1v1h-1zM389 429h1v1h-1zM172 436h1v1h-1zM86 437h1v1h-1zM181 433h1v1h-1zM69 446h1v1h-1zM111 444h1v1h-1zM279 438h1v1h-1zM54 446h1v1h-1zM87 462h1v1h-1zM78 457h1v1h-1zM266 439h1v1h-1zM142 457h1v1h-1zM133 444h1v1h-1zM80 455h1v1h-1zM72 447h1v1h-1zM251 437h1v1h-1zM234 441h1v1h-1zM356 428h1v1h-1zM386 437h1v1h-1zM164 441h1v1h-1zM396 415h1v1h-1zM367 429h1v1h-1zM156 443h1v1h-1zM315 428h1v1h-1zM171 425h1v1h-1zM286 426h1v1h-1zM70 459h1v1h-1zM70 458h1v1h-1zM234 449h1v1h-1zM196 437h1v1h-1zM276 428h1v1h-1zM196 437h1v1h-1zM100 456h1v1h-1zM53 455h1v1h-1zM194 450h1v1h-1zM255 444h1v1h-1zM169 451h1v1h-1z"/>
<path fill="#0080ff" d="M340 412h1v1h-1zM62 434h1v1h-1zM390 405h1v1h-1zM230 431h1v1h-1zM277 422h1v1h-1zM77 434h1v1h-1zM338 420h1v1h-1zM62 438h1v1h-1zM330 406h1v1h-1zM153 427h1v1h-1zM302 403h1v1h-1zM162 433h1v1h-1zM310 416h1v1h-1zM374 430h1v1h-1zM198 422h1v1h-1zM150 418h1v1h-1zM331 416h1v1h-1zM341 418h1v1h-1zM363 404h1v1h-1zM305 412h1v1h-1zM415 407h1v1h-1zM259 433h1v1h-1zM162 417h1v1h-1zM163 435h1v1h-1zM312 418h1v1h-1zM79 441h1v1h-1zM76 440h1v1h-1zM167 434h1v1h-1zM295 402h1v1h-1zM275 405h1v1h-1zM289 422h1v1h-1zM119 417h1v1h-1zM187 414h1v1h-1zM120 436h1v1h-1zM207 430h1v1h-1zM75 429h1v1h-1zM285 425h1v1h-1zM114 434h1v1h-1zM332 401h1v1h-1zM217 411h1v1h-1zM57 447h1v1h-1z"/>
<path fill="#00ffff" d="M214 422h1v1h-1zM99 432h1v1h-1zM265 415h1v1h-1zM368 440h1v1h-1zM139 433h1v1h-1zM189 428h1v1h-1zM66 436h1v1h-1zM313 415h1v1h-1zM314 430h1v1h-1zM174 433h1v1h-1zM96 422h1v1h-1zM274 421h1v1h-1zM180 426h1v1h-1zM131 407h1v1h-1zM265 442h1v1h-1zM153 439h1v1h-1zM348 400h1v1h-1zM356 425h1v1h-1zM195 438h1v1h-1zM144 433h1v1h-1zM210 427h1v1h-1zM268 400h1v1h-1zM120 445h1v1h-1zM98 443h1v1h-1zM271 433h1v1h-1zM241 435h1v1h-1zM216 429h1v1h-1zM118 435h1v1h-1zM221 427h1v1h-1zM307 439h1v1h-1zM190 426h1v1h-1zM132 437h1v1h-1zM185 426h1v1h-1zM374 412h1v1h-1zM179 419h1v1h-1zM181 438h1v1h-1zM103 433h1v1h-1zM204 438h1v1h-1zM307 428h1v1h-1zM254 432h1v1h-1zM113 447h1v1h-1zM407 433h1v1h-1zM105 448h1v1h-1zM69 455h1v1h-1z"/>
<path fill="#ffff00" d="M136 464h1v1h-1zM105 453h1v1h-1zM180 445h1v1h-1zM348 435h1v1h-1zM98 443h1v1h-1zM265 444h1v1h-1zM131 435h1v1h-1zM209 452h1v1h-1zM366 437h1v1h-1zM296 441h1v1h-1zM146 450h1v1h-1zM169 449h1v1h-1zM55 474h1v1h-1zM213 448h1v1h-1zM268 445h1v1h-1zM248 445h1v1h-1zM84 484h1v1h-1zM448 444h1v1h-1zM246 448h1v1h-1zM366 441h1v1h-1zM89 449h1v1h-1zM106 451h1v1h-1zM149 483h1v1h-1zM72 450h1v1h-1zM78 465h1v1h-1zM212 451h1v1h-1zM81 450h1v1h-1zM81 441h1v1h-1zM373 445h1v1h-1zM302 425h1v1h-1zM170 452h1v1h-1zM96 454h1v1h-1zM98 451h1v1h-1zM114 457h1v1h-1zM187 436h1v1h-1zM313 428h1v1h-1zM72 457h1v1h-1zM488 423h1v1h-1zM348 448h1v1h-1zM493 423h1v1h-1zM176 441h1v1h-1zM295 444h1v1h-1zM52 459h1v1h-1zM59 448h1v1h-1zM373 432h1v1h-1zM321 429h1v1h-1z"/>
<path fill="#ff0000" d="M52 456h1v1h-1zM121 451h1v1h-1zM123 457h1v1h-1zM63 457h1v1h-1zM55 461h1v1h-1zM72 455h1v1h-1zM296 420h1v1h-1zM67 445h1v1h-1zM296 428h1v1h-1zM95 447h1v1h-1zM230 447h1v1h-1zM132 445h1v1h-1zM79 458h1v1h-1zM430 416h1v1h-1zM219 443h1v1h-1zM333 435h1v1h-1zM156 449h1v1h-1zM343 422h1v1h-1zM115 442h1v1h-1zM173 451h1v1h-1zM58 451h1v1h-1zM284 441h1v1h-1zM240 428h1v1h-1zM441 417h1v1h-1zM291 443h1v1h-1zM162 451h1v1h-1zM336 432h1v1h-1zM136 441h1v1h-1zM348 438h1v1h-1zM360 433h1v1h-1zM327 441h1v1h-1zM349 435h1v1h-1zM409 449h1v1h-1zM404 430h1v1h-1zM372 424h1v1h-1zM69 468h1v1h-1zM52 448h1v1h-1zM165 457h1v1h-1zM133 441h1v1h-1zM207 446h1v1h-1zM357 441h1v1h-1zM372 425h1v1h-1zM85 453h1v1h-1zM186 457h1v1h-1z"/>
<path fill="#00ff00" d="M200 448h1v1h-1zM73 435h1v1h-1zM60 460h1v1h-1zM231 429h1v1h-1zM169 448h1v1h-1zM217 433h1v1h-1zM167 434h1v1h-1zM278 440h1v1h-1zM276 445h1v1h-1zM73 440h1v1h-1zM278 440h1v1h-1zM329 436h1v1h-1zM51 458h1v1h-1zM166 453h1v1h-1zM60 450h1v1h-1zM56 451h1v1h-1zM474 422h1v1h-1zM55 457h1v1h-1zM78 464h1v1h-1zM105 453h1v1h-1zM282 424h1v1h-1zM183 438h1v1h-1zM94 444h1v1h-1zM56 463h1v1h-1zM93 437h1v1h-1zM184 431h1v1h-1zM171 434h1v1h-1zM172 442h1v1h-1zM238 439h1v1h-1zM221 445h1v1h-1zM126 445h1v1h-1zM277 437h1v1h-1zM268 429h1v1h-1zM140 442h1v1h-1zM198 438h1v1h-1zM170 438h1v1h-1zM89 436h1v1h-1zM430 413h1v1h-1zM153 454h1v1h-1zM327 436h1v1h-1zM165 447h1v1h-1zM136 437h1v1h-1zM313 421h1v1h-1zM143 435h1v1h-1z"/>
<path fill="#0080ff" d="M131 435h1v1h-1zM276 411h1v1h-1zM113 438h1v1h-1zM335 427h1v1h-1zM351 416h1v1h-1zM252 435h1v1h-1zM186 433h1v1h-1zM58 440h1v1h-1zM226 405h1v1h-1zM144 437h1v1h-1zM261 422h1v1h-1zM261 430h1v1h-1zM275 409h1v1h-1zM66 442h1v1h-1zM85 432h1v1h-1zM341 429h1v1h-1zM188 416h1v1h-1zM85 415h1v1h-1zM403 415h1v1h-1zM208 428h1v1h-1zM115 436h1v1h-1zM156 442h1v1h-1zM227 436h1v1h-1zM296 425h1v1h-1zM155 428h1v1h-1zM74 443h1v1h-1zM177 428h1v1h-1zM292 424h1v1h-1zM267 410h1v1h-1zM117 416h1v1h-1zM172 417h1v1h-1zM251 410h1v1h-1zM300 414h1v1h-1zM446 410h1v1h-1zM70 432h1v1h-1zM67 439h1v1h-1zM225 417h1v1h-1zM141 434h1v1h-1zM53 440h1v1h-1zM149 416h1v1h-1zM313 416h1v1h-1z"/>
<path fill="#00ffff" d="M344 425h1v1h-1zM301 432h1v1h-1zM371 440h1v1h-1zM91 433h1v1h-1zM107 442h1v1h-1zM202 439h1v1h-1zM241 431h1v1h-1zM444 406h1v1h-1zM319 435h1v1h-1zM76 451h1v1h-1zM353 428h1v1h-1zM72 438h1v1h-1zM270 416h1v1h-1zM100 435h1v1h-1zM300 412h1v1h-1zM444 431h1v1h-1zM172 436h1v1h-1zM267 428h1v1h-1zM360 425h1v1h-1zM171 450h1v1h-1zM304 420h1v1h-1zM81 454h1v1h-1zM508 422h1v1h-1zM317 436h1v1h-1zM212 432h1v1h-1zM93 447h1v1h-1zM292 424h1v1h-1zM62 447h1v1h-1zM230 448h1v1h-1zM200 430h1v1h-1zM215 412h1v1h-1zM313 417h1v1h-1zM382 417h1v1h-1zM88 437h1v1h-1zM187 439h1v1h-1zM121 442h1v1h-1zM102 434h1v1h-1zM138 453h1v1h-1zM245 419h1v1h-1zM68 443h1v1h-1zM327 422h1v1h-1zM411 429h1v1h-1zM145 451h1v1h-1zM126 434h1v1h-1z"/>
<path fill="#ffff00" d="M141 433h1v1h-1zM96 436h1v1h-1zM364 432h1v1h-1zM361 442h1v1h-1zM76 484h1v1h-1zM50 463h1v1h-1zM141 483h1v1h-1zM231 428h1v1h-1zM89 440h1v1h-1zM92 461h1v1h-1zM276 426h1v1h-1zM179 454h1v1h-1zM189 434h1v1h-1zM79 448h1v1h-1zM193 447h1v1h-1zM159 442h1v1h-1zM162 448h1v1h-1zM82 456h1v1h-1zM253 483h1v1h-1zM434 484h1v1h-1zM140 456h1v1h-1zM181 444h1v1h-1zM85 456h1v1h-1zM83 464h1v1h-1zM246 434h1v1h-1zM181 447h1v1h-1zM81 463h1v1h-1zM259 432h1v1h-1zM108 461h1v1h-1zM104 439h1v1h-1zM501 420h1v1h-1zM161 432h1v1h-1zM65 458h1v1h-1zM261 452h1v1h-1zM112 445h1v1h-1zM177 456h1v1h-1zM144 440h1v1h-1zM271 453h1v1h-1zM184 452h1v1h-1zM94 454h1v1h-1zM65 457h1v1h-1zM227 446h1v1h-1zM90 459h1v1h-1zM116 455h1v1h-1zM342 444h1v1h-1zM245 450h1v1h-1z"/>
<path fill="#ff0000" d="M111 440h1v1h-1zM374 430h1v1h-1zM89 435h1v1h-1zM220 446h1v1h-1zM224 446h1v1h-1zM211 426h1v1h-1zM151 432h1v1h-1zM132 440h1v1h-1zM90 458h1v1h-1zM340 432h1v1h-1zM220 434h1v1h-1zM313 450h1v1h-1zM246 437h1v1h-1zM57 453h1v1h-1zM332 425h1v1h-1zM117 457h1v1h-1zM349 430h1v1h-1zM215 447h1v1h-1zM220 440h1v1h-1zM221 449h1v1h-1zM159 440h1v1h-1zM226 444h1v1h-1zM328 446h1v1h-1zM94 454h1v1h-1zM317 429h1v1h-1zM117 459h1v1h-1zM321 424h1v1h-1zM347 436h1v1h-1zM213 444h1v1h-1zM148 442h1v1h-1zM177 436h1v1h-1zM170 445h1v1h-1zM289 427h1v1h-1zM260 436h1v1h-1zM391 427h1v1h-1zM113 445h1v1h-1zM69 449h1v1h-1zM370 437h1v1h-1zM149 449h1v1h-1zM104 458h1v1h-1zM100 465h1v1h-1zM212 428h1v1h-1zM208 436h1v1h-1z"/>
<path fill="#00ff00" d="M214 432h1v1h-1zM270 433h1v1h-1zM178 440h1v1h-1zM377 421h1v1h-1zM430 419h1v1h-1zM360 422h1v1h-1zM108 454h1v1h-1zM291 425h1v1h-1zM93 453h1v1h-1zM55 443h1v1h-1zM238 439h1v1h-1zM228 426h1v1h-1zM156 448h1v1h-1zM213 426h1v1h-1zM166 449h1v1h-1zM410 428h1v1h-1zM105 449h1v1h-1zM118 446h1v1h-1zM326 422h1v1h-1zM239 439h1v1h-1zM142 446h1v1h-1zM187 442h1v1h-1zM94 458h1v1h-1zM414 414h1v1h-1zM113 453h1v1h-1zM50 457h1v1h-1zM379 433h1v1h-1zM147 433h1v1h-1zM77 444h1v1h-1zM152 450h1v1h-1zM62 459h1v1h-1zM396 432h1v1h-1zM106 459h1v1h-1zM232 430h1v1h-1zM258 433h1v1h-1zM498 436h1v1h-1zM96 434h1v1h-1zM355 437h1v1h-1zM407 425h1v1h-1zM310 438h1v1h-1zM258 425h1v1h-1zM219 440h1v1h-1zM229 434h1v1h-1z"/>
<path fill="#0080ff" d="M372 410h1v1h-1zM247 434h1v1h-1zM116 430h1v1h-1zM178 430h1v1h-1zM222 412h1v1h-1zM248 435h1v1h-1zM154 411h1v1h-1zM78 451h1v1h-1zM454 395h1v1h-1zM277 424h1v1h-1zM102 422h1v1h-1zM184 439h1v1h-1zM186 434h1v1h-1zM228 412h1v1h-1zM209 423h1v1h-1zM147 419h1v1h-1zM90 429h1v1h-1zM172 439h1v1h-1zM229 413h1v1h-1zM154 418h1v1h-1zM196 434h1v1h-1zM57 441h1v1h-1zM181 438h1v1h-1zM82 449h1v1h-1zM267 426h1v1h-1zM197 427h1v1h-1zM184 413h1v1h-1zM129 431h1v1h-1zM233 411h1v1h-1zM146 443h1v1h-1zM214 428h1v1h-1zM171 416h1v1h-1zM289 416h1v1h-1zM453 427h1v1h-1zM115 425h1v1h-1zM244 427h1v1h-1zM442 415h1v1h-1zM117 427h1v1h-1zM119 433h1v1h-1zM293 425h1v1h-1zM353 403h1v1h-1z"/>
<path fill="#00ffff" d="M252 442h1v1h-1zM101 441h1v1h-1zM278 415h1v1h-1zM348 415h1v1h-1zM89 429h1v1h-1zM281 436h1v1h-1zM179 426h1v1h-1zM276 413h1v1h-1zM193 412h1v1h-1zM273 432h1v1h-1zM130 424h1v1h-1zM92 461h1v1h-1zM412 416h1v1h-1zM360 425h1v1h-1zM187 439h1v1h-1zM269 412h1v1h-1zM261 427h1v1h-1zM117 437h1v1h-1zM54 446h1v1h-1zM340 415h1v1h-1zM199 453h1v1h-1zM55 461h1v1h-1zM178 444h1v1h-1zM167 430h1v1h-1zM188 424h1v1h-1zM103 454h1v1h-1zM131 433h1v1h-1zM366 423h1v1h-1zM265 427h1v1h-1zM269 418h1v1h-1zM214 436h1v1h-1zM145 450h1v1h-1zM319 420h1v1h-1zM157 440h1v1h-1zM114 438h1v1h-1zM353 422h1v1h-1zM62 443h1v1h-1zM123 440h1v1h-1zM76 455h1v1h-1zM105 424h1v1h-1zM183 443h1v1h-1zM169 439h1v1h-1zM177 448h1v1h-1z"/>
<path fill="#ffff00" d="M135 462h1v1h-1zM115 460h1v1h-1zM184 440h1v1h-1zM258 431h1v1h-1zM236 453h1v1h-1zM413 441h1v1h-1zM291 425h1v1h-1zM434 431h1v1h-1zM313 423h1v1h-1zM227 449h1v1h-1zM206 452h1v1h-1zM79 472h1v1h-1zM91 457h1v1h-1zM143 452h1v1h-1zM67 483h1v1h-1zM77 484h1v1h-1zM235 437h1v1h-1zM212 430h1v1h-1zM135 452h1v1h-1zM162 446h1v1h-1zM151 449h1v1h-1zM156 452h1v1h-1zM154 435h1v1h-1zM136 451h1v1h-1zM135 446h1v1h-1zM92 439h1v1h-1zM131 441h1v1h-1zM240 441h1v1h-1zM158 446h1v1h-1zM261 448h1v1h-1zM51 472h1v1h-1zM231 431h1v1h-1zM143 460h1v1h-1zM102 449h1v1h-1zM103 460h1v1h-1zM97 454h1v1h-1zM196 440h1v1h-1zM422 421h1v1h-1zM123 436h1v1h-1zM385 447h1v1h-1zM376 443h1v1h-1zM410 429h1v1h-1zM59 464h1v1h-1zM296 448h1v1h-1zM287 445h1v1h-1zM278 426h1v1h-1z"/>
<path fill="#ff0000" d="M228 427h1v1h-1zM237 450h1v1h-1zM206 451h1v1h-1zM99 461h1v1h-1zM51 450h1v1h-1zM366 437h1v1h-1zM176 436h1v1h-1zM211 428h1v1h-1zM154 454h1v1h-1zM127 443h1v1h-1zM117 458h1v1h-1zM263 449h1v1h-1zM380 420h1v1h-1zM319 422h1v1h-1zM102 458h1v1h-1zM411 441h1v1h-1zM258 433h1v1h-1zM414 420h1v1h-1zM62 444h1v1h-1zM105 449h1v1h-1zM277 433h1v1h-1zM167 437h1v1h-1zM135 459h1v1h-1zM112 451h1v1h-1zM241 430h1v1h-1zM371 440h1v1h-1zM84 461h1v1h-1zM214 453h1v1h-1zM224 443h1v1h-1zM351 431h1v1h-1zM286 424h1v1h-1zM377 435h1v1h-1zM107 457h1v1h-1zM260 432h1v1h-1zM385 417h1v1h-1zM151 437h1v1h-1zM428 422h1v1h-1zM121 441h1v1h-1zM89 441h1v1h-1zM211 437h1v1h-1zM122 438h1v1h-1zM293 445h1v1h-1zM317 433h1v1h-1z"/>
<path fill="#00ff00" d="M192 434h1v1h-1zM388 428h1v1h-1zM184 431h1v1h-1zM231 438h1v1h-1zM454 437h1v1h-1zM172 446h1v1h-1zM195 440h1v1h-1zM116 449h1v1h-1zM311 427h1v1h-1zM283 433h1v1h-1zM117 443h1v1h-1zM172 431h1v1h-1zM119 439h1v1h-1zM111 436h1v1h-1zM109 437h1v1h-1zM286 426h1v1h-1zM252 429h1v1h-1zM163 453h1v1h-1zM394 429h1v1h-1zM172 429h1v1h-1zM487 430h1v1h-1zM219 434h1v1h-1zM160 455h1v1h-1zM156 447h1v1h-1zM68 451h1v1h-1zM134 454h1v1h-1zM86 460h1v1h-1zM307 422h1v1h-1zM237 428h1v1h-1zM217 451h1v1h-1zM334 420h1v1h-1zM315 433h1v1h-1zM285 441h1v1h-1zM215 445h1v1h-1zM355 433h1v1h-1zM378 441h1v1h-1zM172 444h1v1h-1zM217 440h1v1h-1zM205 447h1v1h-1zM94 452h1v1h-1zM130 449h1v1h-1zM148 434h1v1h-1zM331 422h1v1h-1z"/>
<path fill="#0080ff" d="M472 408h1v1h-1zM271 425h1v1h-1zM68 440h1v1h-1zM356 422h1v1h-1zM85 442h1v1h-1zM128 437h1v1h-1zM60 439h1v1h-1zM353 416h1v1h-1zM144 419h1v1h-1zM154 422h1v1h-1zM159 424h1v1h-1zM324 409h1v1h-1zM397 399h1v1h-1zM447 413h1v1h-1zM57 436h1v1h-1zM158 429h1v1h-1zM190 416h1v1h-1zM59 420h1v1h-1zM103 420h1v1h-1zM100 444h1v1h-1zM119 421h1v1h-1zM70 439h1v1h-1zM97 450h1v1h-1zM81 433h1v1h-1zM190 434h1v1h-1zM214 412h1v1h-1zM111 427h1v1h-1zM379 411h1v1h-1zM113 414h1v1h-1zM163 439h1v1h-1zM190 440h1v1h-1zM78 395h1v1h-1zM82 422h1v1h-1zM331 424h1v1h-1zM357 411h1v1h-1zM296 433h1v1h-1zM83 448h1v1h-1zM302 421h1v1h-1zM116 423h1v1h-1zM422 417h1v1h-1zM480 424h1v1h-1z"/>
<path fill="#00ffff" d="M59 430h1v1h-1zM78 440h1v1h-1zM229 451h1v1h-1zM376 433h1v1h-1zM78 453h1v1h-1zM290 419h1v1h-1zM73 440h1v1h-1zM55 468h1v1h-1zM67 455h1v1h-1zM147 445h1v1h-1zM133 433h1v1h-1zM239 429h1v1h-1zM167 441h1v1h-1zM120 437h1v1h-1zM412 408h1v1h-1zM85 449h1v1h-1zM399 410h1v1h-1zM190 449h1v1h-1zM250 399h1v1h-1zM164 415h1v1h-1zM343 435h1v1h-1zM146 446h1v1h-1zM166 431h1v1h-1zM102 451h1v1h-1zM160 447h1v1h-1zM68 433h1v1h-1zM281 442h1v1h-1zM125 451h1v1h-1zM342 423h1v1h-1zM79 449h1v1h-1zM203 433h1v1h-1zM136 439h1v1h-1zM52 447h1v1h-1zM151 443h1v1h-1zM174 434h1v1h-1zM291 424h1v1h-1zM81 452h1v1h-1zM84 453h1v1h-1zM229 434h1v1h-1zM217 422h1v1h-1zM119 449h1v1h-1zM404 431h1v1h-1zM149 452h1v1h-1z"/>
<path fill="#ffff00" d="M324 443h1v1h-1zM238 452h1v1h-1zM71 459h1v1h-1zM186 453h1v1h-1zM167 444h1v1h-1zM266 426h1v1h-1zM259 449h1v1h-1zM108 463h1v1h-1zM67 459h1v1h-1zM119 436h1v1h-1zM413 423h1v1h-1zM289 427h1v1h-1zM267 447h1v1h-1zM146 461h1v1h-1zM72 445h1v1h-1zM478 435h1v1h-1zM214 444h1v1h-1zM94 439h1v1h-1zM266 445h1v1h-1zM366 423h1v1h-1zM286 447h1v1h-1zM133 446h1v1h-1zM62 468h1v1h-1zM138 442h1v1h-1zM108 440h1v1h-1zM262 442h1v1h-1zM231 484h1v1h-1zM401 439h1v1h-1zM154 451h1v1h-1zM56 472h1v1h-1zM114 454h1v1h-1zM391 427h1v1h-1zM390 428h1v1h-1zM430 428h1v1h-1zM240 447h1v1h-1zM367 431h1v1h-1zM112 459h1v1h-1zM295 434h1v1h-1zM208 438h1v1h-1zM264 483h1v1h-1zM72 469h1v1h-1zM290 451h1v1h-1zM243 433h1v1h-1zM427 443h1v1h-1zM175 435h1v1h-1z"/>
<path fill="#ff0000" d="M345 434h1v1h-1zM114 440h1v1h-1zM392 424h1v1h-1zM251 441h1v1h-1zM320 443h1v1h-1zM358 426h1v1h-1zM205 449h1v1h-1zM255 434h1v1h-1zM392 444h1v1h-1zM56 472h1v1h-1zM202 446h1v1h-1zM85 441h1v1h-1zM232 452h1v1h-1zM179 455h1v1h-1zM120 452h1v1h-1zM380 437h1v1h-1zM97 462h1v1h-1zM370 422h1v1h-1zM105 440h1v1h-1zM155 432h1v1h-1zM396 432h1v1h-1zM65 470h1v1h-1zM284 431h1v1h-1zM217 448h1v1h-1zM156 443h1v1h-1zM181 446h1v1h-1zM298 433h1v1h-1zM51 470h1v1h-1zM232 426h1v1h-1zM323 443h1v1h-1zM111 448h1v1h-1zM66 443h1v1h-1zM177 432h1v1h-1zM129 443h1v1h-1zM99 450h1v1h-1zM195 444h1v1h-1zM134 444h1v1h-1zM150 454h1v1h-1zM73 466h1v1h-1zM119 431h1v1h-1zM356 425h1v1h-1zM378 448h1v1h-1zM251 439h1v1h-1z"/>
<path fill="#00ff00" d="M395 434h1v1h-1zM60 448h1v1h-1zM209 450h1v1h-1zM281 440h1v1h-1zM327 432h1v1h-1zM370 445h1v1h-1zM135 453h1v1h-1zM169 452h1v1h-1zM253 432h1v1h-1zM457 436h1v1h-1zM126 432h1v1h-1zM245 446h1v1h-1zM280 434h1v1h-1zM116 449h1v1h-1zM148 438h1v1h-1zM162 452h1v1h-1zM88 457h1v1h-1zM55 455h1v1h-1zM445 420h1v1h-1zM397 424h1v1h-1zM162 452h1v1h-1zM58 461h1v1h-1zM96 448h1v1h-1zM90 448h1v1h-1zM384 417h1v1h-1zM74 458h1v1h-1zM156 447h1v1h-1zM155 437h1v1h-1zM209 442h1v1h-1zM462 419h1v1h-1zM247 425h1v1h-1zM75 446h1v1h-1zM169 434h1v1h-1zM105 455h1v1h-1zM336 432h1v1h-1zM211 431h1v1h-1zM103 456h1v1h-1zM131 435h1v1h-1zM346 427h1v1h-1zM113 443h1v1h-1zM223 435h1v1h-1zM342 416h1v1h-1zM66 446h1v1h-1z"/>
<path fill="#0080ff" d="M186 411h1v1h-1zM401 408h1v1h-1zM57 423h1v1h-1zM96 425h1v1h-1zM75 438h1v1h-1zM301 435h1v1h-1zM315 422h1v1h-1zM210 420h1v1h-1zM149 429h1v1h-1zM76 438h1v1h-1zM194 426h1v1h-1zM305 422h1v1h-1zM128 427h1v1h-1zM143 413h1v1h-1zM388 411h1v1h-1zM244 417h1v1h-1zM63 431h1v1h-1zM122 436h1v1h-1zM193 441h1v1h-1zM298 415h1v1h-1zM136 434h1v1h-1zM459 428h1v1h-1zM52 447h1v1h-1zM101 447h1v1h-1zM103 420h1v1h-1zM187 427h1v1h-1zM195 434h1v1h-1zM175 438h1v1h-1zM319 416h1v1h-1zM356 417h1v1h-1zM234 413h1v1h-1zM268 427h1v1h-1zM66 448h1v1h-1zM71 452h1v1h-1zM282 428h1v1h-1zM176 439h1v1h-1zM208 417h1v1h-1zM170 420h1v1h-1zM175 425h1v1h-1zM210 412h1v1h-1zM275 437h1v1h-1z"/>
<path fill="#00ffff" d="M143 448h1v1h-1zM406 425h1v1h-1zM205 434h1v1h-1zM233 429h1v1h-1zM434 433h1v1h-1zM258 428h1v1h-1zM268 432h1v1h-1zM85 459h1v1h-1zM160 422h1v1h-1zM405 420h1v1h-1zM132 441h1v1h-1zM166 420h1v1h-1zM280 432h1v1h-1zM353 423h1v1h-1zM76 441h1v1h-1zM331 410h1v1h-1zM454 404h1v1h-1zM227 419h1v1h-1zM134 439h1v1h-1zM62 447h1v1h-1zM407 418h1v1h-1zM192 441h1v1h-1zM273 407h1v1h-1zM185 430h1v1h-1zM459 424h1v1h-1zM379 410h1v1h-1zM142 454h1v1h-1zM286 427h1v1h-1zM216 447h1v1h-1zM399 409h1v1h-1zM115 434h1v1h-1zM164 442h1v1h-1zM246 416h1v1h-1zM52 453h1v1h-1zM427 415h1v1h-1zM77 443h1v1h-1zM188 448h1v1h-1zM211 428h1v1h-1zM153 453h1v1h-1zM178 444h1v1h-1zM114 445h1v1h-1zM265 423h1v1h-1zM387 426h1v1h-1z"/>
<path fill="#ffff00" d="M284 439h1v1h-1zM128 435h1v1h-1zM128 451h1v1h-1zM457 423h1v1h-1zM488 423h1v1h-1zM312 438h1v1h-1zM359 443h1v1h-1zM279 431h1v1h-1zM105 440h1v1h-1zM424 421h1v1h-1zM159 438h1v1h-1zM79 460h1v1h-1zM144 461h1v1h-1zM146 452h1v1h-1zM458 440h1v1h-1zM102 441h1v1h-1zM165 483h1v1h-1zM317 484h1v1h-1zM50 450h1v1h-1zM188 444h1v1h-1zM464 434h1v1h-1zM167 442h1v1h-1zM256 427h1v1h-1zM146 452h1v1h-1zM304 448h1v1h-1zM379 439h1v1h-1zM368 433h1v1h-1zM233 442h1v1h-1zM109 444h1v1h-1zM370 443h1v1h-1zM151 443h1v1h-1zM74 484h1v1h-1zM99 447h1v1h-1zM161 448h1v1h-1zM344 426h1v1h-1zM67 448h1v1h-1zM265 432h1v1h-1zM298 427h1v1h-1zM345 446h1v1h-1zM96 453h1v1h-1zM320 434h1v1h-1zM123 460h1v1h-1zM92 466h1v1h-1zM160 432h1v1h-1zM264 434h1v1h-1z"/>
<path fill="#ff0000" d="M242 426h1v1h-1zM52 459h1v1h-1zM200 439h1v1h-1zM75 458h1v1h-1zM116 459h1v1h-1zM279 429h1v1h-1zM131 442h1v1h-1zM73 452h1v1h-1zM140 448h1v1h-1zM359 441h1v1h-1zM111 441h1v1h-1zM163 447h1v1h-1zM249 445h1v1h-1zM91 448h1v1h-1zM271 434h1v1h-1zM282 441h1v1h-1zM65 470h1v1h-1zM83 462h1v1h-1zM287 429h1v1h-1zM249 429h1v1h-1zM219 450h1v1h-1zM65 463h1v1h-1zM203 456h1v1h-1zM376 422h1v1h-1zM312 420h1v1h-1zM267 434h1v1h-1zM245 441h1v1h-1zM117 462h1v1h-1zM120 451h1v1h-1zM181 453h1v1h-1zM280 426h1v1h-1zM175 437h1v1h-1zM193 450h1v1h-1zM266 450h1v1h-1zM67 460h1v1h-1zM212 452h1v1h-1zM69 453h1v1h-1zM149 457h1v1h-1zM241 449h1v1h-1zM276 432h1v1h-1zM196 428h1v1h-1zM238 430h1v1h-1zM184 448h1v1h-1z"/>
<path fill="#00ff00" d="M106 453h1v1h-1zM66 464h1v1h-1zM78 464h1v1h-1zM183 425h1v1h-1zM137 447h1v1h-1zM82 460h1v1h-1zM255 427h1v1h-1zM359 431h1v1h-1zM102 443h1v1h-1zM332 441h1v1h-1zM60 456h1v1h-1zM184 431h1v1h-1zM72 466h1v1h-1zM150 457h1v1h-1zM200 451h1v1h-1zM67 445h1v1h-1zM271 439h1v1h-1zM284 438h1v1h-1zM490 420h1v1h-1zM120 442h1v1h-1zM277 428h1v1h-1zM302 436h1v1h-1zM168 431h1v1h-1zM63 442h1v1h-1zM138 452h1v1h-1zM218 434h1v1h-1zM91 439h1v1h-1zM129 442h1v1h-1zM141 439h1v1h-1zM435 438h1v1h-1zM158 448h1v1h-1zM292 423h1v1h-1zM291 429h1v1h-1zM208 443h1v1h-1zM77 449h1v1h-1zM375 414h1v1h-1zM172 425h1v1h-1zM380 438h1v1h-1zM379 438h1v1h-1zM349 437h1v1h-1zM113 453h1v1h-1zM174 437h1v1h-1zM142 453h1v1h-1z"/>
<path fill="#0080ff" d="M129 444h1v1h-1zM141 424h1v1h-1zM104 430h1v1h-1zM51 449h1v1h-1zM60 433h1v1h-1zM381 425h1v1h-1zM131 417h1v1h-1zM482 424h1v1h-1zM188 433h1v1h-1zM168 435h1v1h-1zM465 413h1v1h-1zM223 418h1v1h-1zM318 416h1v1h-1zM111 422h1v1h-1zM58 458h1v1h-1zM94 424h1v1h-1zM308 405h1v1h-1zM242 414h1v1h-1zM92 418h1v1h-1zM286 436h1v1h-1zM321 414h1v1h-1zM209 416h1v1h-1zM256 408h1v1h-1zM174 415h1v1h-1zM152 416h1v1h-1zM405 414h1v1h-1zM103 435h1v1h-1zM169 419h1v1h-1zM91 440h1v1h-1zM184 420h1v1h-1zM183 435h1v1h-1zM121 444h1v1h-1zM108 432h1v1h-1zM381 417h1v1h-1zM252 411h1v1h-1zM169 430h1v1h-1zM171 417h1v1h-1zM114 419h1v1h-1zM267 425h1v1h-1zM101 443h1v1h-1zM165 407h1v1h-1z"/>
<path fill="#00ffff" d="M56 447h1v1h-1zM396 418h1v1h-1zM385 420h1v1h-1zM297 383h1v1h-1zM119 441h1v1h-1zM334 424h1v1h-1zM284 419h1v1h-1zM298 418h1v1h-1zM437 408h1v1h-1zM185 435h1v1h-1zM336 414h1v1h-1zM57 460h1v1h-1zM107 428h1v1h-1zM396 423h1v1h-1zM94 453h1v1h-1zM348 425h1v1h-1zM189 434h1v1h-1zM180 446h1v1h-1zM360 428h1v1h-1zM358 427h1v1h-1zM135 448h1v1h-1zM147 443h1v1h-1zM173 420h1v1h-1zM322 428h1v1h-1zM253 449h1v1h-1zM226 438h1v1h-1zM288 430h1v1h-1zM188 430h1v1h-1zM75 463h1v1h-1zM147 419h1v1h-1zM374 424h1v1h-1zM217 434h1v1h-1zM155 434h1v1h-1zM384 416h1v1h-1zM187 420h1v1h-1zM69 439h1v1h-1zM95 443h1v1h-1zM302 414h1v1h-1zM387 423h1v1h-1zM120 437h1v1h-1zM261 420h1v1h-1zM371 414h1v1h-1zM489 439h1v1h-1z"/>
<path fill="#ffff00" d="M383 438h1v1h-1zM65 442h1v1h-1zM193 432h1v1h-1zM313 436h1v1h-1zM185 443h1v1h-1zM78 449h1v1h-1zM160 484h1v1h-1zM244 443h1v1h-1zM156 442h1v1h-1zM155 446h1v1h-1zM495 440h1v1h-1zM72 453h1v1h-1zM127 442h1v1h-1zM201 442h1v1h-1zM138 453h1v1h-1zM150 444h1v1h-1zM125 441h1v1h-1zM81 484h1v1h-1zM265 425h1v1h-1zM353 435h1v1h-1zM288 437h1v1h-1zM58 462h1v1h-1zM101 458h1v1h-1zM71 484h1v1h-1zM309 432h1v1h-1zM57 445h1v1h-1zM359 423h1v1h-1zM240 446h1v1h-1zM106 439h1v1h-1zM375 435h1v1h-1zM146 445h1v1h-1zM199 443h1v1h-1zM133 453h1v1h-1zM136 455h1v1h-1zM73 447h1v1h-1zM387 434h1v1h-1zM107 462h1v1h-1zM89 445h1v1h-1zM159 445h1v1h-1zM140 456h1v1h-1zM129 441h1v1h-1zM193 452h1v1h-1zM279 442h1v1h-1zM238 436h1v1h-1zM150 435h1v1h-1z"/>
<path fill="#ff0000" d="M87 439h1v1h-1zM228 433h1v1h-1zM51 467h1v1h-1zM176 433h1v1h-1zM176 436h1v1h-1zM140 461h1v1h-1zM291 435h1v1h-1zM93 464h1v1h-1zM257 436h1v1h-1zM407 429h1v1h-1zM303 442h1v1h-1zM426 437h1v1h-1zM88 461h1v1h-1zM176 432h1v1h-1zM192 447h1v1h-1zM199 444h1v1h-1zM119 451h1v1h-1zM397 429h1v1h-1zM122 434h1v1h-1zM232 452h1v1h-1zM117 441h1v1h-1zM89 459h1v1h-1zM244 445h1v1h-1zM296 442h1v1h-1zM134 446h1v1h-1zM127 446h1v1h-1zM60 458h1v1h-1zM127 449h1v1h-1zM203 440h1v1h-1zM159 451h1v1h-1zM356 431h1v1h-1zM163 455h1v1h-1zM59 451h1v1h-1zM198 437h1v1h-1zM271 434h1v1h-1zM198 435h1v1h-1zM450 434h1v1h-1zM166 447h1v1h-1zM84 443h1v1h-1zM188 432h1v1h-1zM194 447h1v1h-1zM429 430h1v1h-1zM155 439h1v1h-1z"/>
<path fill="#00ff00" d="M379 427h1v1h-1zM88 435h1v1h-1zM140 454h1v1h-1zM59 441h1v1h-1zM462 417h1v1h-1zM113 442h1v1h-1zM53 460h1v1h-1zM188 436h1v1h-1zM129 448h1v1h-1zM248 447h1v1h-1zM79 443h1v1h-1zM308 438h1v1h-1zM106 462h1v1h-1zM311 444h1v1h-1zM317 420h1v1h-1zM195 425h1v1h-1zM177 440h1v1h-1zM140 454h1v1h-1zM50 458h1v1h-1zM111 446h1v1h-1zM236 430h1v1h-1zM102 458h1v1h-1zM115 442h1v1h-1zM230 432h1v1h-1zM111 439h1v1h-1zM156 454h1v1h-1zM58 455h1v1h-1zM71 463h1v1h-1zM359 432h1v1h-1zM504 412h1v1h-1zM207 447h1v1h-1zM214 438h1v1h-1zM220 431h1v1h-1zM304 444h1v1h-1zM107 454h1v1h-1zM404 422h1v1h-1zM245 453h1v1h-1zM482 435h1v1h-1zM124 441h1v1h-1zM242 441h1v1h-1zM270 447h1v1h-1zM248 440h1v1h-1zM229 436h1v1h-1z"/>
<path fill="#0080ff" d="M346 403h1v1h-1zM121 422h1v1h-1zM109 408h1v1h-1zM149 420h1v1h-1zM78 428h1v1h-1zM88 440h1v1h-1zM80 428h1v1h-1zM206 428h1v1h-1zM179 422h1v1h-1zM247 431h1v1h-1zM70 440h1v1h-1zM249 428h1v1h-1zM173 430h1v1h-1zM248 430h1v1h-1zM449 409h1v1h-1zM239 407h1v1h-1zM105 398h1v1h-1zM120 428h1v1h-1zM161 436h1v1h-1zM106 440h1v1h-1zM277 404h1v1h-1zM127 437h1v1h-1zM101 436h1v1h-1zM101 441h1v1h-1zM101 442h1v1h-1zM201 432h1v1h-1zM140 417h1v1h-1zM235 415h1v1h-1zM274 433h1v1h-1zM288 421h1v1h-1zM58 453h1v1h-1zM75 437h1v1h-1zM414 406h1v1h-1zM143 426h1v1h-1zM500 402h1v1h-1zM63 450h1v1h-1zM60 424h1v1h-1zM67 432h1v1h-1zM189 411h1v1h-1zM110 442h1v1h-1zM60 446h1v1h-1z"/>
<path fill="#00ffff" d="M81 433h1v1h-1zM56 456h1v1h-1zM52 444h1v1h-1zM200 438h1v1h-1zM141 437h1v1h-1zM80 452h1v1h-1zM187 439h1v1h-1zM260 424h1v1h-1zM335 426h1v1h-1zM184 421h1v1h-1zM102 433h1v1h-1zM162 423h1v1h-1zM104 442h1v1h-1zM224 436h1v1h-1zM240 423h1v1h-1zM152 433h1v1h-1zM105 443h1v1h-1zM57 465h1v1h-1zM248 419h1v1h-1zM243 417h1v1h-1zM221 448h1v1h-1zM126 440h1v1h-1zM65 456h1v1h-1zM59 456h1v1h-1zM60 447h1v1h-1zM384 428h1v1h-1zM239 431h1v1h-1zM354 433h1v1h-1zM184 421h1v1h-1zM357 437h1v1h-1zM89 422h1v1h-1zM215 423h1v1h-1zM225 426h1v1h-1zM356 414h1v1h-1zM182 419h1v1h-1zM81 449h1v1h-1zM65 465h1v1h-1zM294 418h1v1h-1zM139 426h1v1h-1zM53 438h1v1h-1zM267 425h1v1h-1zM108 440h1v1h-1zM59 450h1v1h-1z"/>
<path fill="#ffff00" d="M83 461h1v1h-1zM294 446h1v1h-1zM278 440h1v1h-1zM209 442h1v1h-1zM281 450h1v1h-1zM170 483h1v1h-1zM199 427h1v1h-1zM121 455h1v1h-1zM305 441h1v1h-1zM160 449h1v1h-1zM182 431h1v1h-1zM196 436h1v1h-1zM223 432h1v1h-1zM316 430h1v1h-1zM105 454h1v1h-1zM301 435h1v1h-1zM91 447h1v1h-1zM222 453h1v1h-1zM55 473h1v1h-1zM337 431h1v1h-1zM262 431h1v1h-1zM243 438h1v1h-1zM57 464h1v1h-1zM308 442h1v1h-1zM197 446h1v1h-1zM149 484h1v1h-1zM204 434h1v1h-1zM205 440h1v1h-1zM64 484h1v1h-1zM55 475h1v1h-1zM72 454h1v1h-1zM76 458h1v1h-1zM70 461h1v1h-1zM88 438h1v1h-1zM208 436h1v1h-1zM137 442h1v1h-1zM64 466h1v1h-1zM437 431h1v1h-1zM198 455h1v1h-1zM171 448h1v1h-1zM438 427h1v1h-1zM394 434h1v1h-1zM287 449h1v1h-1zM453 425h1v1h-1zM278 446h1v1h-1z"/>
<path fill="#ff0000" d="M114 440h1v1h-1zM260 443h1v1h-1zM308 446h1v1h-1zM247 444h1v1h-1zM101 448h1v1h-1zM300 431h1v1h-1zM68 469h1v1h-1zM91 461h1v1h-1zM332 440h1v1h-1zM127 453h1v1h-1zM133 446h1v1h-1zM183 455h1v1h-1zM236 440h1v1h-1zM244 448h1v1h-1zM207 456h1v1h-1zM358 444h1v1h-1zM186 443h1v1h-1zM270 439h1v1h-1zM274 433h1v1h-1zM66 449h1v1h-1zM155 435h1v1h-1zM397 437h1v1h-1zM103 452h1v1h-1zM76 440h1v1h-1zM246 447h1v1h-1zM60 466h1v1h-1zM307 435h1v1h-1zM182 434h1v1h-1zM457 417h1v1h-1zM277 440h1v1h-1zM262 446h1v1h-1zM80 457h1v1h-1zM117 450h1v1h-1zM79 440h1v1h-1zM134 438h1v1h-1zM168 453h1v1h-1zM55 447h1v1h-1zM83 448h1v1h-1zM65 464h1v1h-1zM440 430h1v1h-1zM411 438h1v1h-1zM161 446h1v1h-1zM265 444h1v1h-1z"/>
<path fill="#00ff00" d="M413 425h1v1h-1zM141 444h1v1h-1zM111 446h1v1h-1zM442 438h1v1h-1zM420 418h1v1h-1zM314 436h1v1h-1zM61 463h1v1h-1zM148 450h1v1h-1zM115 443h1v1h-1zM99 437h1v1h-1zM97 449h1v1h-1zM125 451h1v1h-1zM388 433h1v1h-1zM448 413h1v1h-1zM208 450h1v1h-1zM280 443h1v1h-1zM146 436h1v1h-1zM166 436h1v1h-1zM96 434h1v1h-1zM79 442h1v1h-1zM432 420h1v1h-1zM161 434h1v1h-1zM247 446h1v1h-1zM444 424h1v1h-1zM50 452h1v1h-1zM116 436h1v1h-1zM270 440h1v1h-1zM72 450h1v1h-1zM176 446h1v1h-1zM195 437h1v1h-1zM130 458h1v1h-1zM204 426h1v1h-1zM158 454h1v1h-1zM166 447h1v1h-1zM157 436h1v1h-1zM71 457h1v1h-1zM371 427h1v1h-1zM368 439h1v1h-1zM225 448h1v1h-1zM288 425h1v1h-1zM223 452h1v1h-1zM208 439h1v1h-1zM102 439h1v1h-1z"/>
<path fill="#0080ff" d="M190 410h1v1h-1zM89 428h1v1h-1zM126 439h1v1h-1zM347 429h1v1h-1zM62 449h1v1h-1zM155 414h1v1h-1zM282 417h1v1h-1zM159 429h1v1h-1zM235 430h1v1h-1zM150 442h1v1h-1zM175 431h1v1h-1zM221 417h1v1h-1zM128 443h1v1h-1zM123 435h1v1h-1zM414 417h1v1h-1zM82 449h1v1h-1zM205 416h1v1h-1zM405 420h1v1h-1zM101 428h1v1h-1zM306 417h1v1h-1zM55 440h1v1h-1zM93 437h1v1h-1zM58 441h1v1h-1zM222 435h1v1h-1zM318 436h1v1h-1zM461 403h1v1h-1zM278 416h1v1h-1zM317 426h1v1h-1zM252 423h1v1h-1zM182 416h1v1h-1zM94 432h1v1h-1zM241 424h1v1h-1zM159 432h1v1h-1zM362 425h1v1h-1zM72 435h1v1h-1zM60 432h1v1h-1zM226 423h1v1h-1zM364 415h1v1h-1zM75 435h1v1h-1zM167 431h1v1h-1zM106 443h1v1h-1z"/>
<path fill="#00ffff" d="M299 415h1v1h-1zM108 429h1v1h-1zM150 447h1v1h-1zM213 404h1v1h-1zM210 438h1v1h-1zM281 434h1v1h-1zM265 426h1v1h-1zM217 442h1v1h-1zM158 433h1v1h-1zM225 421h1v1h-1zM104 454h1v1h-1zM214 448h1v1h-1zM438 424h1v1h-1zM324 420h1v1h-1zM380 430h1v1h-1zM188 426h1v1h-1zM347 434h1v1h-1zM115 438h1v1h-1zM61 457h1v1h-1zM76 441h1v1h-1zM370 429h1v1h-1zM57 447h1v1h-1zM125 433h1v1h-1zM77 465h1v1h-1zM240 437h1v1h-1zM420 431h1v1h-1zM63 430h1v1h-1zM59 437h1v1h-1zM59 452h1v1h-1zM327 435h1v1h-1zM204 444h1v1h-1zM339 414h1v1h-1zM246 400h1v1h-1zM204 424h1v1h-1zM140 414h1v1h-1zM126 450h1v1h-1zM65 457h1v1h-1zM153 448h1v1h-1zM175 438h1v1h-1zM67 440h1v1h-1zM159 443h1v1h-1zM55 459h1v1h-1zM333 430h1v1h-1z"/>
</svg>



<!-- table -->
<div class="a" style="left:40px;top:529px;width:607px;height:2px;background:#6a6a6a"></div>
<div class="a" style="left:145px;top:513px;width:2px;height:120px;background:#6a6a6a"></div>
<div class="a" style="left:273px;top:513px;width:2px;height:120px;background:#6a6a6a"></div>
<div class="a" style="left:408px;top:513px;width:2px;height:120px;background:#6a6a6a"></div>
<div class="a" style="left:536px;top:513px;width:2px;height:120px;background:#6a6a6a"></div>


<!-- right panel -->
<div class="a" style="left:553px;top:149px;width:86px;height:24px;background:#fdfdfd;border:1px solid #0078d4;border-radius:4px"></div>
<div class="sep" style="left:544px;top:186px;width:114px"></div>
<div class="a" style="left:549px;top:194px;width:13px;height:13px;border-radius:50%;background:#0067c0"></div>
<div class="a" style="left:553px;top:198px;width:5px;height:5px;border-radius:50%;background:#fff"></div>
<div class="a" style="left:549px;top:213px;width:13px;height:13px;border-radius:50%;background:#f0f0f0;border:1px solid #7a7a7a"></div>
<div class="sep" style="left:544px;top:231px;width:114px"></div>
<div class="a" style="left:549px;top:241px;width:13px;height:13px;border-radius:3px;background:#f3f3f3;border:1px solid #7a7a7a"></div>
<div class="a" style="left:549px;top:263px;width:72px;height:23px;background:#f5f5f5;border:1px solid #dadada"></div>
<div class="a" style="left:603px;top:263px;width:18px;height:23px;background:#efefef;border:1px solid #b0b0b0"></div>
<div class="a" style="left:604px;top:274px;width:16px;height:1px;background:#d0d0d0"></div>
<svg class="a" style="left:607px;top:267px" width="10" height="16" viewBox="0 0 10 16"><path d="M2 4.5h6L5 1.5z" fill="#a0a0a0"/><path d="M2 11.5h6L5 14.5z" fill="#a0a0a0"/></svg>
<div class="sep" style="left:544px;top:296px;width:114px"></div>
<div class="chk" style="left:549px;top:311px"><svg width="13" height="13" viewBox="0 0 13 13"><path d="M3.2 6.8l2.2 2.2 4.4-4.6" fill="none" stroke="#fff" stroke-width="1"/></svg></div>

<div class="t" style="left:30.60px;top:9px;font-size:12.00px;letter-spacing:-0.133px;color:#fff">HD Tune Pro 5.75 - Hard Disk/SSD Utility</div>
<div class="t" style="left:8.50px;top:34px;font-size:12.00px;letter-spacing:-0.608px">File</div>
<div class="t" style="left:44.30px;top:34px;font-size:12.00px;letter-spacing:-0.192px">Help</div>
<div class="t" style="left:58.80px;top:99px;font-size:12.00px;letter-spacing:-0.316px">Benchmark</div>
<div class="t" style="left:181.60px;top:99px;font-size:12.00px;letter-spacing:0.025px">Info</div>
<div class="t" style="left:266.30px;top:99px;font-size:12.00px;letter-spacing:-0.160px">Health</div>
<div class="t" style="left:365.00px;top:99px;font-size:11.00px;letter-spacing:-0.042px">Error Scan</div>
<div class="t" style="left:481.90px;top:99px;font-size:11.50px;letter-spacing:-0.084px">Folder Usage</div>
<div class="t" style="left:613.60px;top:99px;font-size:12.00px;letter-spacing:-1.288px">Erase</div>
<div class="t" style="left:60.70px;top:119px;font-size:11.50px;letter-spacing:-0.079px">File Benchmark</div>
<div class="t" style="left:207.50px;top:119px;font-size:12.00px;letter-spacing:-0.025px">Disk monitor</div>
<div class="t" style="left:341.00px;top:119px;font-size:12.00px;letter-spacing:0.300px">AAM</div>
<div class="t" style="left:586.00px;top:119px;font-size:11.50px;letter-spacing:-0.233px">Extra tests</div>
<div class="t" style="left:435.90px;top:117px;font-size:11.50px;letter-spacing:-0.100px">Random Access</div>
<div class="t" style="left:584.40px;top:154px;font-size:12.00px;letter-spacing:-0.488px">Start</div>
<div class="t" style="left:565.80px;top:194px;font-size:12.00px;letter-spacing:-1.300px">Read</div>
<div class="t" style="left:565.40px;top:213px;font-size:12.00px;letter-spacing:-0.119px">Write</div>
<div class="t" style="left:565.30px;top:242px;font-size:12.00px;letter-spacing:-0.182px">Short stroke</div>
<div class="t" style="left:552.80px;top:267px;font-size:12.00px;letter-spacing:-0.850px;color:#8d8d8d">40</div>
<div class="t" style="left:635.30px;top:267px;font-size:12.00px;letter-spacing:-1.275px">gB</div>
<div class="t" style="left:565.30px;top:312px;font-size:11.50px;letter-spacing:-0.125px">4 KB align</div>
<div class="t" style="left:626.90px;top:62px;font-size:12.00px;letter-spacing:-0.600px">Exit</div>
<div class="t" style="left:16.60px;top:62px;font-size:11.50px;letter-spacing:-0.153px">ST24000DM001-3Y7103 (24000 gB)</div>
<div class="t" style="left:328.50px;top:63px;font-size:12.50px;letter-spacing:0.092px;font-weight:bold">36~C</div>
<div class="t" style="left:50.00px;top:137px;font-size:10.50px;letter-spacing:-0.600px">ms</div>
<div class="t" style="left:25.45px;top:446px;font-size:10.40px;letter-spacing:0.300px">10.0</div>
<div class="t" style="left:25.45px;top:413px;font-size:10.40px;letter-spacing:0.300px">20.0</div>
<div class="t" style="left:25.45px;top:379px;font-size:10.40px;letter-spacing:0.300px">30.0</div>
<div class="t" style="left:25.45px;top:346px;font-size:10.40px;letter-spacing:0.300px">40.0</div>
<div class="t" style="left:25.45px;top:312px;font-size:10.40px;letter-spacing:0.300px">50.0</div>
<div class="t" style="left:25.45px;top:279px;font-size:10.40px;letter-spacing:0.300px">60.0</div>
<div class="t" style="left:25.45px;top:246px;font-size:10.40px;letter-spacing:0.300px">70.0</div>
<div class="t" style="left:25.45px;top:212px;font-size:10.40px;letter-spacing:0.300px">80.0</div>
<div class="t" style="left:25.45px;top:179px;font-size:10.40px;letter-spacing:0.300px">90.0</div>
<div class="t" style="left:19.38px;top:145px;font-size:10.40px;letter-spacing:0.300px">100.0</div>
<div class="t" style="left:47.61px;top:490px;font-size:10.40px;letter-spacing:0.300px">0</div>
<div class="t" style="left:84.49px;top:490px;font-size:10.40px;letter-spacing:0.300px">2400</div>
<div class="t" style="left:131.49px;top:490px;font-size:10.40px;letter-spacing:0.300px">4800</div>
<div class="t" style="left:177.49px;top:490px;font-size:10.40px;letter-spacing:0.300px">7200</div>
<div class="t" style="left:224.49px;top:490px;font-size:10.40px;letter-spacing:0.300px">9600</div>
<div class="t" style="left:267.44px;top:490px;font-size:10.40px;letter-spacing:0.300px">12000</div>
<div class="t" style="left:314.44px;top:490px;font-size:10.40px;letter-spacing:0.300px">14400</div>
<div class="t" style="left:360.44px;top:490px;font-size:10.40px;letter-spacing:0.300px">16800</div>
<div class="t" style="left:407.44px;top:490px;font-size:10.40px;letter-spacing:0.300px">19200</div>
<div class="t" style="left:453.44px;top:490px;font-size:10.40px;letter-spacing:0.300px">21600</div>
<div class="t" style="left:493.77px;top:490px;font-size:10.40px;letter-spacing:0.300px">24000gB</div>
<div class="t" style="left:52.40px;top:512px;font-size:11.50px;letter-spacing:0.654px;font-weight:bold">transfer size</div>
<div class="t" style="left:161.00px;top:512px;font-size:11.50px;letter-spacing:0.830px;font-weight:bold">operations / sec</div>
<div class="t" style="left:288.00px;top:512px;font-size:11.50px;letter-spacing:0.652px;font-weight:bold">avg. access time</div>
<div class="t" style="left:422.40px;top:512px;font-size:11.50px;letter-spacing:0.498px;font-weight:bold">max. access time</div>
<div class="t" style="left:565.30px;top:512px;font-size:11.50px;letter-spacing:0.517px;font-weight:bold">avg. speed</div>
<div class="sq" style="left:22px;top:540px;background:#ffff00"></div>
<div class="chk" style="left:40px;top:538px"><svg width="13" height="13" viewBox="0 0 13 13"><path d="M3.2 6.8l2.2 2.2 4.4-4.6" fill="none" stroke="#fff" stroke-width="1"/></svg></div>
<div class="t" style="left:56.30px;top:538px;font-size:11.50px;letter-spacing:-0.172px">512 bytes</div>
<div class="t" style="left:204.75px;top:534px;font-size:12.00px;font-weight:bold">90</div>
<div class="t" style="left:224.00px;top:534px;font-size:12.00px;letter-spacing:-0.092px;font-weight:bold">IOPS</div>
<div class="t" style="left:321.85px;top:534px;font-size:12.00px;font-weight:bold">11.005</div>
<div class="t" style="left:365.00px;top:534px;font-size:12.00px;letter-spacing:-1.950px;font-weight:bold">ms</div>
<div class="t" style="left:449.10px;top:534px;font-size:12.00px;font-weight:bold">22.844</div>
<div class="t" style="left:492.90px;top:534px;font-size:12.00px;letter-spacing:-1.950px;font-weight:bold">ms</div>
<div class="t" style="left:567.77px;top:534px;font-size:12.00px;font-weight:bold">0.044</div>
<div class="t" style="left:604.70px;top:534px;font-size:12.00px;letter-spacing:0.808px;font-weight:bold">MB/s</div>
<div class="sq" style="left:22px;top:559px;background:#ff0000"></div>
<div class="chk" style="left:40px;top:557px"><svg width="13" height="13" viewBox="0 0 13 13"><path d="M3.2 6.8l2.2 2.2 4.4-4.6" fill="none" stroke="#fff" stroke-width="1"/></svg></div>
<div class="t" style="left:56.30px;top:557px;font-size:11.00px;letter-spacing:-0.450px">4 KB</div>
<div class="t" style="left:204.75px;top:553px;font-size:12.00px;font-weight:bold">82</div>
<div class="t" style="left:224.00px;top:553px;font-size:12.00px;letter-spacing:-0.092px;font-weight:bold">IOPS</div>
<div class="t" style="left:321.20px;top:553px;font-size:12.00px;font-weight:bold">12.160</div>
<div class="t" style="left:365.00px;top:553px;font-size:12.00px;letter-spacing:-1.950px;font-weight:bold">ms</div>
<div class="t" style="left:449.10px;top:553px;font-size:12.00px;font-weight:bold">23.650</div>
<div class="t" style="left:492.90px;top:553px;font-size:12.00px;letter-spacing:-1.950px;font-weight:bold">ms</div>
<div class="t" style="left:567.77px;top:553px;font-size:12.00px;font-weight:bold">0.321</div>
<div class="t" style="left:604.70px;top:553px;font-size:12.00px;letter-spacing:0.808px;font-weight:bold">MB/s</div>
<div class="sq" style="left:22px;top:578px;background:#00ff00"></div>
<div class="chk" style="left:40px;top:576px"><svg width="13" height="13" viewBox="0 0 13 13"><path d="M3.2 6.8l2.2 2.2 4.4-4.6" fill="none" stroke="#fff" stroke-width="1"/></svg></div>
<div class="t" style="left:56.30px;top:576px;font-size:11.00px;letter-spacing:-0.469px">64 KB</div>
<div class="t" style="left:204.75px;top:572px;font-size:12.00px;font-weight:bold">77</div>
<div class="t" style="left:224.00px;top:572px;font-size:12.00px;letter-spacing:-0.092px;font-weight:bold">IOPS</div>
<div class="t" style="left:321.20px;top:572px;font-size:12.00px;font-weight:bold">12.887</div>
<div class="t" style="left:365.00px;top:572px;font-size:12.00px;letter-spacing:-1.950px;font-weight:bold">ms</div>
<div class="t" style="left:449.10px;top:572px;font-size:12.00px;font-weight:bold">24.053</div>
<div class="t" style="left:492.90px;top:572px;font-size:12.00px;letter-spacing:-1.950px;font-weight:bold">ms</div>
<div class="t" style="left:567.77px;top:572px;font-size:12.00px;font-weight:bold">4.850</div>
<div class="t" style="left:604.70px;top:572px;font-size:12.00px;letter-spacing:0.808px;font-weight:bold">MB/s</div>
<div class="sq" style="left:22px;top:598px;background:#0080ff"></div>
<div class="chk" style="left:40px;top:596px"><svg width="13" height="13" viewBox="0 0 13 13"><path d="M3.2 6.8l2.2 2.2 4.4-4.6" fill="none" stroke="#fff" stroke-width="1"/></svg></div>
<div class="t" style="left:56.30px;top:596px;font-size:11.50px;letter-spacing:-0.183px">1 MB</div>
<div class="t" style="left:204.75px;top:592px;font-size:12.00px;font-weight:bold">58</div>
<div class="t" style="left:224.00px;top:592px;font-size:12.00px;letter-spacing:-0.092px;font-weight:bold">IOPS</div>
<div class="t" style="left:321.85px;top:592px;font-size:12.00px;font-weight:bold">17.115</div>
<div class="t" style="left:365.00px;top:592px;font-size:12.00px;letter-spacing:-1.950px;font-weight:bold">ms</div>
<div class="t" style="left:449.10px;top:592px;font-size:12.00px;font-weight:bold">30.703</div>
<div class="t" style="left:492.90px;top:592px;font-size:12.00px;letter-spacing:-1.950px;font-weight:bold">ms</div>
<div class="t" style="left:561.10px;top:592px;font-size:12.00px;font-weight:bold">58.425</div>
<div class="t" style="left:604.70px;top:592px;font-size:12.00px;letter-spacing:0.808px;font-weight:bold">MB/s</div>
<div class="sq" style="left:22px;top:619px;background:#00ffff"></div>
<div class="chk" style="left:40px;top:617px"><svg width="13" height="13" viewBox="0 0 13 13"><path d="M3.2 6.8l2.2 2.2 4.4-4.6" fill="none" stroke="#fff" stroke-width="1"/></svg></div>
<div class="t" style="left:56.30px;top:617px;font-size:12.00px;letter-spacing:-0.370px">Random</div>
<div class="t" style="left:204.75px;top:613px;font-size:12.00px;font-weight:bold">68</div>
<div class="t" style="left:224.00px;top:613px;font-size:12.00px;letter-spacing:-0.092px;font-weight:bold">IOPS</div>
<div class="t" style="left:321.20px;top:613px;font-size:12.00px;font-weight:bold">14.677</div>
<div class="t" style="left:365.00px;top:613px;font-size:12.00px;letter-spacing:-1.950px;font-weight:bold">ms</div>
<div class="t" style="left:449.10px;top:613px;font-size:12.00px;font-weight:bold">68.622</div>
<div class="t" style="left:492.90px;top:613px;font-size:12.00px;letter-spacing:-1.950px;font-weight:bold">ms</div>
<div class="t" style="left:561.10px;top:613px;font-size:12.00px;font-weight:bold">34.569</div>
<div class="t" style="left:604.70px;top:613px;font-size:12.00px;letter-spacing:0.808px;font-weight:bold">MB/s</div>
</body></html>
